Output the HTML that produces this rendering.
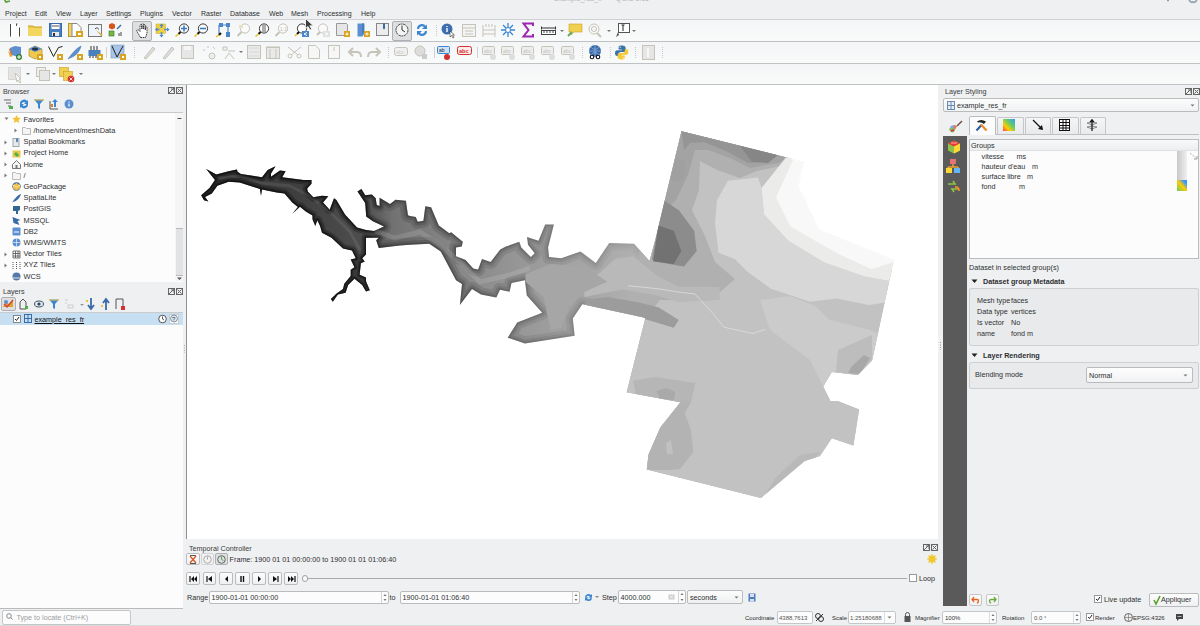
<!DOCTYPE html>
<html><head><meta charset="utf-8">
<style>
*{margin:0;padding:0;box-sizing:border-box}
html,body{width:1200px;height:626px;overflow:hidden;background:#eff0f1;font-family:"Liberation Sans",sans-serif;font-size:7.2px;color:#2d2f31}
.a{position:absolute}
.t{position:absolute;white-space:nowrap;line-height:9px}
.menu span{position:absolute;top:9px;font-size:7px;line-height:9px}
.tb{position:absolute;left:0;width:1200px;background:linear-gradient(#f4f5f6,#f9fafa);border-bottom:1px solid #bfc1c3}
.sel{position:absolute;border:1px solid #aeb0b2;border-radius:2px;background:#dedfe0}
.box{position:absolute;background:#fcfcfc;border:1px solid #bcbebf}
.btn{position:absolute;border:1px solid #b9bbbd;border-radius:2px;background:linear-gradient(#fcfcfc,#eff0f1)}
.inp{position:absolute;border:1px solid #b9bbbd;border-radius:2px;background:#fcfcfc}
svg.i{position:absolute;overflow:visible}
</style></head><body>
<!-- title strip -->
<div class="a" style="left:0;top:0;width:1200px;height:19px;background:#eff0f1"></div>
<svg class="i" style="left:2px;top:-4px" width="10" height="8"><path d="M1 1 L4 6 L8 5" stroke="#5b9c3a" stroke-width="1.6" fill="none"/></svg>
<div class="t" style="left:554px;top:-6.5px;color:#b4b6b9;font-size:7px">example_res_fr* — QGIS 3.16</div>
<svg class="i" style="left:1160px;top:0px" width="40" height="5"><rect x="7" y="0" width="2" height="1.2" fill="#999"/><path d="M29 -1.5a4 4 0 0 0 8 0" stroke="#9a9a9a" stroke-width="1.6" fill="none"/><path d="M32 2h2" stroke="#7fb3e0" stroke-width="1.5"/></svg>
<!-- menu -->
<div class="menu">
<span style="left:5px">Project</span>
<span style="left:35px">Edit</span>
<span style="left:56px">View</span>
<span style="left:80px">Layer</span>
<span style="left:106px">Settings</span>
<span style="left:140px">Plugins</span>
<span style="left:172px">Vector</span>
<span style="left:201px">Raster</span>
<span style="left:230px">Database</span>
<span style="left:269px">Web</span>
<span style="left:291px">Mesh</span>
<span style="left:317px">Processing</span>
<span style="left:361px">Help</span>
</div>
<!-- toolbars -->
<div class="tb" style="top:19px;height:23px;border-top:1px solid #cfd1d3"></div>
<div class="tb" style="top:42px;height:22px"></div>
<div class="tb" style="top:64px;height:21px"></div>
<!-- map canvas -->
<div class="a" style="left:186px;top:85px;width:752px;height:454px;background:#fff;border-left:1px solid #8e9092"></div>


<!-- bottom strip -->
<div class="a" style="left:0;top:625px;width:1200px;height:1px;background:#d8d9da"></div>
<svg class="i" style="left:9px;top:23px" width="12" height="14" viewBox="0 0 12 14"><rect x="2" y="1" width="8" height="12.5" fill="#fff"/><path d="M1.5 1v12.5M10.5 4.5v9" stroke="#444"/><path d="M7 1h1.5M7.5 1v2" stroke="#555" fill="none"/></svg>
<svg class="i" style="left:28px;top:24px" width="15" height="12" viewBox="0 0 15 12"><path d="M0 2h5l1 1h8v9H0z" fill="#e8c94a"/><path d="M0 4h14v8H0z" fill="#f2d660"/><path d="M0 2h5l1 1h8" stroke="#c9a12a" fill="none"/></svg>
<svg class="i" style="left:49px;top:23px" width="13" height="14" viewBox="0 0 13 14"><rect x="0.5" y="0.5" width="12" height="13" fill="#4a7fc0" stroke="#3a6aa8"/><rect x="2.5" y="1" width="8" height="5" fill="#fff"/><path d="M3 3h7" stroke="#555"/><rect x="3" y="9" width="7" height="4" fill="#e8e8e8"/><rect x="4" y="10" width="2" height="3" fill="#333"/></svg>
<svg class="i" style="left:68px;top:23px" width="16" height="14" viewBox="0 0 16 14"><rect x="0.5" y="0.5" width="8" height="13" fill="#f1d36a" stroke="#b8962a"/><path d="M4 0.5h5l4 4v9h-9z" fill="#fff" stroke="#888"/><rect x="8" y="8" width="7" height="6" fill="#d9a520"/><path d="M10 10h3v2h-3z" fill="#fff"/></svg>
<svg class="i" style="left:88px;top:23px" width="16" height="15" viewBox="0 0 16 15"><rect x="0.5" y="1.5" width="13" height="12" fill="#eef4fb" stroke="#777"/><path d="M7 5l1 1M9 4l0 2M10 6l1 0" stroke="#555"/><path d="M8 7l5 6 2-1z" fill="#e0b040"/></svg>
<svg class="i" style="left:109px;top:23px" width="13" height="14" viewBox="0 0 13 14"><polygon points="3,0 6,1.5 6,5 3,6.5 0,5 0,1.5" fill="#d9531e"/><rect x="0" y="8" width="5" height="5" fill="#7cb342" stroke="#2e7d32" stroke-width="0.6"/><path d="M8 6l4-4" stroke="#3a6aa8" stroke-width="1.5"/><path d="M10 10v3M12 9v4" stroke="#444"/></svg>
<div class="sel" style="left:132px;top:21px;width:20px;height:20px"></div>
<svg class="i" style="left:136px;top:23px" width="12" height="15" viewBox="0 0 12 15"><path d="M4.5 14.5L1 8.5c-0.8-1.5 0.8-2.5 1.8-1.2L4 8.5V2.5c0-1.2 1.8-1.2 1.8 0V6V1.5c0-1.2 1.8-1.2 1.8 0V6V2.5c0-1.2 1.8-1.2 1.8 0V7V4.5c0-1.1 1.6-1.1 1.6 0V10l-1.5 4.5z" fill="#fff" stroke="#111" stroke-width="0.8" stroke-dasharray="1.6 0.7"/><path d="M6.2 2v4M8 2.5v4" stroke="#666" stroke-width="0.6"/></svg>
<svg class="i" style="left:155px;top:23px" width="15" height="15" viewBox="0 0 15 15"><rect x="1" y="1" width="9.5" height="9.5" fill="#f0d040" stroke="#d0a820" stroke-width="0.5"/><path d="M6.5 0.5l-2 2.5h4zM6.5 14.5l-2-2.5h4zM0 6.5l2.5-2v4zM14.5 6.5l-2.5-2v4z" fill="#3f7fc8"/><path d="M6.5 2v3M6.5 9v4M1.5 6.5h3M9 6.5h4" stroke="#5b8fd0" stroke-width="1.6"/></svg>
<svg class="i" style="left:175px;top:23px" width="15" height="14" viewBox="0 0 15 14"><circle cx="9" cy="5.5" r="4.6" fill="#fff" stroke="#222" stroke-width="0.9"/><path d="M6 5.5h6M9 2.5v6" stroke="#3a78c0" stroke-width="1.6"/><path d="M5.5 9l-2 2" stroke="#111" stroke-width="2"/><path d="M3.5 11l-3 2.5" stroke="#e8c020" stroke-width="1.5"/></svg>
<svg class="i" style="left:194px;top:23px" width="15" height="14" viewBox="0 0 15 14"><circle cx="9" cy="5.5" r="4.6" fill="#fff" stroke="#222" stroke-width="0.9"/><path d="M6 5.5h6" stroke="#3a78c0" stroke-width="1.6"/><path d="M5.5 9l-2 2" stroke="#111" stroke-width="2"/><path d="M3.5 11l-3 2.5" stroke="#e8c020" stroke-width="1.5"/></svg>
<svg class="i" style="left:216px;top:23px" width="15" height="14" viewBox="0 0 15 14"><path d="M3 0h4v4H3zM10 0h4v4h-4zM10 9h4v5h-4z" fill="#4a86c8"/><path d="M3 2v10M12 2v10M3 2h10" stroke="#4a86c8" stroke-width="1.2" fill="none"/><path d="M5 10l-2 2" stroke="#111" stroke-width="2"/><path d="M3 12l-3 2" stroke="#e8c020" stroke-width="1.5"/></svg>
<svg class="i" style="left:236px;top:23px" width="15" height="14" viewBox="0 0 15 14"><circle cx="9" cy="5.5" r="4.6" fill="#fafafa" stroke="#c6c3b8"/><path d="M5.5 9l-4 4" stroke="#c6c3b8" stroke-width="2"/><rect x="3" y="2" width="4" height="3" fill="#e8e0c0"/></svg>
<svg class="i" style="left:255px;top:23px" width="15" height="14" viewBox="0 0 15 14"><circle cx="9" cy="5.5" r="4.6" fill="#fff" stroke="#222" stroke-width="0.9"/><path d="M8 2v7M10 2v7" stroke="#333" stroke-width="0.8"/><path d="M5.5 9l-2 2" stroke="#111" stroke-width="2"/><path d="M3.5 11l-3 2.5" stroke="#e8c020" stroke-width="1.5"/></svg>
<svg class="i" style="left:274px;top:23px" width="15" height="14" viewBox="0 0 15 14"><circle cx="9" cy="5.5" r="4.6" fill="#fafafa" stroke="#c6c3b8"/><path d="M5.5 9l-4 4" stroke="#c6c3b8" stroke-width="2"/><text x="6" y="8" font-size="5" fill="#bbb">1:1</text></svg>
<svg class="i" style="left:295px;top:23px" width="16" height="15" viewBox="0 0 16 15"><circle cx="7" cy="5.5" r="4.6" fill="#fff" stroke="#222" stroke-width="0.9"/><path d="M4 9l-2 2" stroke="#111" stroke-width="2"/><path d="M2 11l-2 2" stroke="#e8c020" stroke-width="1.5"/><rect x="7" y="8" width="7" height="6" fill="#4a86c8"/><path d="M12 9.5l-3 1.5 3 1.5" stroke="#fff" fill="none"/></svg>
<svg class="i" style="left:316px;top:23px" width="16" height="15" viewBox="0 0 16 15"><circle cx="7" cy="5.5" r="4.6" fill="#fafafa" stroke="#c6c3b8"/><path d="M4 9l-3 3" stroke="#c6c3b8" stroke-width="2"/><rect x="7" y="8" width="7" height="6" fill="#e0e0e0"/><path d="M9 9.5l3 1.5-3 1.5" stroke="#fff" fill="none"/></svg>
<svg class="i" style="left:336px;top:23px" width="16" height="14" viewBox="0 0 16 14"><path d="M0.5 0.5h10l1 1v11h-11z" fill="#e6e6e6" stroke="#999"/><rect x="8" y="8" width="6" height="6" fill="#d9a520"/><path d="M11 9.5v3M9.5 11h3" stroke="#fff"/></svg>
<svg class="i" style="left:357px;top:23px" width="14" height="14" viewBox="0 0 14 14"><path d="M0.5 0.5h7v10l-2 3h-5z" fill="#5b8fd0"/><path d="M6 0v10" stroke="#3a6aa8"/><rect x="7" y="8" width="6" height="6" fill="#d9a520"/><path d="M10 9.5v3M8.5 11h3" stroke="#fff"/></svg>
<svg class="i" style="left:376px;top:23px" width="13" height="14" viewBox="0 0 13 14"><rect x="0.5" y="0.5" width="12" height="12" fill="#ececec" stroke="#888"/><path d="M7 0.5v6l1-1 1 1v-6" fill="#3a6aa8"/></svg>
<div class="sel" style="left:392px;top:21px;width:20px;height:20px"></div>
<svg class="i" style="left:395px;top:23px" width="14" height="14" viewBox="0 0 14 14"><circle cx="7" cy="7" r="6" fill="#f4f4f4" stroke="#333" stroke-width="0.9" stroke-dasharray="2 0.6"/><path d="M7 2.5v4.5l3 2" stroke="#333" fill="none"/></svg>
<svg class="i" style="left:415px;top:23px" width="14" height="14" viewBox="0 0 14 14"><path d="M2 6a5 5 0 0 1 9-3l1-2v5h-5l2-2a3 3 0 0 0-5 2z" fill="#3a86d0"/><path d="M12 8a5 5 0 0 1-9 3l-1 2V8h5l-2 2a3 3 0 0 0 5-2z" fill="#3a86d0"/></svg>
<svg class="i" style="left:436px;top:24px" width="2" height="14"><path d="M0.5 1v12" stroke="#c8c8c8" stroke-dasharray="1 1"/></svg>
<svg class="i" style="left:441px;top:23px" width="15" height="15" viewBox="0 0 15 15"><circle cx="6" cy="6" r="5.5" fill="#3d6fb0"/><path d="M6 3v1M6 5v4" stroke="#fff" stroke-width="1.4"/><path d="M9 8v6l1.5-1.5 1.5 2.5 1-0.5-1.5-2.5h2z" fill="#fff" stroke="#333" stroke-width="0.6"/></svg>
<svg class="i" style="left:462px;top:24px" width="14" height="13" viewBox="0 0 14 13"><rect x="0.5" y="0.5" width="13" height="12" fill="#f4f4f4" stroke="#c6c3b8"/><path d="M1 4h12M3 7h8M3 10h8" stroke="#c6c3b8"/></svg>
<svg class="i" style="left:482px;top:24px" width="14" height="13" viewBox="0 0 14 13"><path d="M1 1v12M4 0v3M7 0v3M10 0v3M13 1v12M1 6h12M1 10h12" stroke="#c6c3b8" fill="none"/></svg>
<svg class="i" style="left:501px;top:23px" width="14" height="14" viewBox="0 0 14 14"><path d="M7 0v14M0 7h14M2 2l10 10M12 2L2 12" stroke="#3a86d0" stroke-width="1.3"/><circle cx="7" cy="7" r="2.5" fill="#fff" stroke="#3a86d0"/></svg>
<svg class="i" style="left:523px;top:23px" width="11" height="14" viewBox="0 0 11 14"><path d="M10 3V0.5H0.5l5 6.5-5 6.5H10V11" stroke="#9b27b0" stroke-width="2" fill="none"/></svg>
<svg class="i" style="left:541px;top:26px" width="15" height="9" viewBox="0 0 15 9"><path d="M0.5 0.5v3M14.5 0.5v3M0.5 2h14" stroke="#333"/><rect x="0.5" y="4.5" width="14" height="4" fill="#fff" stroke="#444"/><path d="M3 5v2M6 5v2M9 5v2M12 5v2" stroke="#444"/></svg>
<svg class="i" style="left:560px;top:30px" width="4" height="3"><path d="M0 0h4l-2 2z" fill="#777"/></svg>
<svg class="i" style="left:567px;top:23px" width="16" height="14" viewBox="0 0 16 14"><path d="M2 1h13v8H7l-3 3V9H2z" fill="#f0d050" stroke="#d0a020" stroke-width="0.6"/><path d="M1 13l4-4" stroke="#6a6" stroke-width="2"/></svg>
<svg class="i" style="left:587px;top:23px" width="15" height="14" viewBox="0 0 15 14"><circle cx="7" cy="6" r="5" fill="#f8f8f8" stroke="#c6c3b8"/><circle cx="7" cy="6" r="2.5" fill="none" stroke="#c6c3b8"/><path d="M10 10l4 4" stroke="#c6c3b8" stroke-width="2"/></svg>
<svg class="i" style="left:607px;top:30px" width="4" height="3"><path d="M0 0h4l-2 2z" fill="#777"/></svg>
<svg class="i" style="left:616px;top:23px" width="14" height="15" viewBox="0 0 14 15"><rect x="2.5" y="0.5" width="11" height="9" fill="#fff" stroke="#555"/><path d="M7 2v6M5.5 2h3" stroke="#222"/><path d="M2 9l-2 5 3-2" fill="#555"/></svg>
<svg class="i" style="left:632px;top:30px" width="4" height="3"><path d="M0 0h4l-2 2z" fill="#777"/></svg>
<svg class="i" style="left:8px;top:45px" width="15" height="15" viewBox="0 0 15 15"><path d="M1 4l4-2 1 6-3 3z" fill="#e07020"/><path d="M2 3l5-2 6 1v8l-3 2-6-2z" fill="#5b8fd0"/><path d="M0 6l2 6 3-1z" fill="#f0a030"/><circle cx="11" cy="12" r="3" fill="#2e7d32"/><path d="M11 10v4M9 12h4" stroke="#fff"/></svg>
<svg class="i" style="left:28px;top:45px" width="15" height="15" viewBox="0 0 15 15"><path d="M1 4l6-3 7 3v7l-7 3-6-3z" fill="#f0c850" stroke="#a08020" stroke-width="0.6"/><path d="M1 4l6 3 7-3-7-3z" fill="#5b8fd0"/><ellipse cx="7" cy="4" rx="3" ry="1.5" fill="#234"/><rect x="9" y="9" width="6" height="6" fill="#d9a520"/><rect x="11" y="11" width="2" height="2" fill="#fff"/></svg>
<svg class="i" style="left:48px;top:45px" width="15" height="15" viewBox="0 0 15 15"><path d="M0.5 1.5l5 10 5-9 4-1" stroke="#222" fill="none" stroke-width="1"/><rect x="9" y="9" width="6" height="6" fill="#d9a520"/><rect x="11" y="11" width="2" height="2" fill="#fff"/></svg>
<svg class="i" style="left:68px;top:45px" width="15" height="15" viewBox="0 0 15 15"><path d="M0 14c3-4 7-10 13-13-1 5-5 10-11 12z" fill="#5b8fd0" stroke="#3a6aa8" stroke-width="0.5"/><rect x="9" y="9" width="6" height="6" fill="#d9a520"/><rect x="11" y="11" width="2" height="2" fill="#fff"/></svg>
<svg class="i" style="left:88px;top:45px" width="15" height="15" viewBox="0 0 15 15"><rect x="0.5" y="5" width="12" height="6" fill="#4a7fc0"/><path d="M3 1v4M6 1v4M9 1v4" stroke="#333"/><path d="M2 11v2M5 11v2M8 11v2" stroke="#333"/><rect x="9" y="9" width="6" height="6" fill="#d9a520"/><rect x="11" y="11" width="2" height="2" fill="#fff"/></svg>
<div class="a" style="left:106px;top:47px;width:1px;height:11px;background:#cfd0d2"></div>
<svg class="i" style="left:111px;top:45px" width="15" height="15" viewBox="0 0 15 15"><rect x="0" y="0" width="13" height="13" fill="#a8c4e6" stroke="#7a9cc6" stroke-width="0.6"/><path d="M1 1l5 11 6-11M6 12" stroke="#222" fill="none"/><rect x="9" y="9" width="6" height="6" fill="#d9a520"/><rect x="11" y="11" width="2" height="2" fill="#fff"/></svg>
<svg class="i" style="left:134px;top:46px" width="2" height="14"><path d="M0.5 1v12" stroke="#c8c8c8" stroke-dasharray="1 1"/></svg>
<svg class="i" style="left:142px;top:45px" width="14" height="15" viewBox="0 0 14 15"><path d="M2 13l9-11 2 2-9 10z" fill="#ddd" stroke="#c6c3b8"/></svg>
<svg class="i" style="left:161px;top:45px" width="14" height="15" viewBox="0 0 14 15"><path d="M2 13l9-11 2 2-9 10z" fill="#ddd" stroke="#c6c3b8"/></svg>
<svg class="i" style="left:181px;top:45px" width="13" height="14" viewBox="0 0 13 14"><rect x="0.5" y="0.5" width="12" height="13" fill="#e6e6e6" stroke="#c6c3b8"/><rect x="3" y="1" width="7" height="4" fill="#f6f6f6"/></svg>
<svg class="i" style="left:202px;top:45px" width="15" height="15" viewBox="0 0 15 15"><path d="M1 5h2M5 2h2M11 2l2 2" stroke="#c6c3b8"/><circle cx="10" cy="11" r="3" fill="#eee" stroke="#c6c3b8"/></svg>
<svg class="i" style="left:222px;top:45px" width="14" height="15" viewBox="0 0 14 15"><path d="M1 2h4v3H1zM3 14l4-6 5 6M6 6h7" stroke="#c6c3b8" fill="none"/></svg>
<svg class="i" style="left:239px;top:51px" width="4" height="3"><path d="M0 0h4l-2 2z" fill="#777"/></svg>
<svg class="i" style="left:247px;top:45px" width="14" height="14" viewBox="0 0 14 14"><rect x="0.5" y="0.5" width="13" height="13" fill="#eaeaea" stroke="#c6c3b8"/><path d="M2 3h10M2 7h10M2 11h10" stroke="#d8d8d8"/></svg>
<svg class="i" style="left:266px;top:45px" width="14" height="14" viewBox="0 0 14 14"><rect x="0.5" y="2.5" width="13" height="11" fill="#eaeaea" stroke="#c6c3b8"/><path d="M0 2h14M4 4v9M10 4v9" stroke="#c6c3b8"/></svg>
<svg class="i" style="left:287px;top:45px" width="15" height="14" viewBox="0 0 15 14"><circle cx="3" cy="11" r="2" fill="none" stroke="#c6c3b8"/><circle cx="12" cy="11" r="2" fill="none" stroke="#c6c3b8"/><path d="M1 2l10 8M14 2l-10 8" stroke="#c6c3b8"/></svg>
<svg class="i" style="left:308px;top:45px" width="12" height="14" viewBox="0 0 12 14"><path d="M0.5 0.5h7l4 4v9h-11z" fill="#f6f6f6" stroke="#c6c3b8"/></svg>
<svg class="i" style="left:328px;top:45px" width="12" height="14" viewBox="0 0 12 14"><rect x="0.5" y="0.5" width="11" height="13" fill="#f6f6f6" stroke="#c6c3b8"/><path d="M6 2v4" stroke="#c6c3b8"/></svg>
<svg class="i" style="left:348px;top:47px" width="14" height="11" viewBox="0 0 14 11"><path d="M5 1L1 5l4 4M1 5h8c3 0 4 2 4 5" stroke="#c6c3b8" stroke-width="2" fill="none"/></svg>
<svg class="i" style="left:367px;top:47px" width="14" height="11" viewBox="0 0 14 11"><path d="M9 1l4 4-4 4M13 5H5c-3 0-4 2-4 5" stroke="#c6c3b8" stroke-width="2" fill="none"/></svg>
<svg class="i" style="left:388px;top:46px" width="2" height="14"><path d="M0.5 1v12" stroke="#c8c8c8" stroke-dasharray="1 1"/></svg>
<svg class="i" style="left:394px;top:47px" width="14" height="10" viewBox="0 0 14 10"><rect x="0.5" y="0.5" width="13" height="8" rx="2" fill="#f0f0f0" stroke="#c6c3b8"/><text x="2" y="7" font-size="5" fill="#ccc">abc</text></svg>
<svg class="i" style="left:414px;top:45px" width="14" height="15" viewBox="0 0 14 15"><circle cx="6" cy="6" r="5" fill="#ddd" stroke="#c6c3b8"/><rect x="8" y="9" width="5" height="5" fill="#ccc"/></svg>
<div class="a" style="left:434px;top:47px;width:1px;height:11px;background:#cfd0d2"></div>
<svg class="i" style="left:437px;top:46px" width="15" height="14" viewBox="0 0 15 14"><rect x="0.5" y="0.5" width="12" height="7" rx="1" fill="#cfe3f6" stroke="#3a86d0"/><text x="2" y="6" font-size="5" fill="#123">ab</text><circle cx="10" cy="11" r="3" fill="#d32f2f"/></svg>
<svg class="i" style="left:457px;top:46px" width="15" height="10" viewBox="0 0 15 10"><rect x="0.5" y="0.5" width="14" height="8" rx="2" fill="#fdeaea" stroke="#d32f2f"/><text x="2" y="7" font-size="5.5" fill="#d32f2f" font-weight="bold">abc</text></svg>
<div class="a" style="left:477px;top:47px;width:1px;height:11px;background:#cfd0d2"></div>
<svg class="i" style="left:482px;top:46px" width="15" height="14" viewBox="0 0 15 14"><rect x="0.5" y="0.5" width="12" height="8" rx="1" fill="#eee" stroke="#c6c3b8"/><text x="2" y="7" font-size="5" fill="#c4c4c4">abc</text><circle cx="11" cy="11" r="3" fill="#ddd"/></svg>
<svg class="i" style="left:501px;top:46px" width="15" height="14" viewBox="0 0 15 14"><rect x="0.5" y="0.5" width="12" height="8" rx="1" fill="#eee" stroke="#c6c3b8"/><text x="2" y="7" font-size="5" fill="#c4c4c4">abc</text><circle cx="11" cy="11" r="3" fill="#ddd"/></svg>
<svg class="i" style="left:521px;top:46px" width="15" height="14" viewBox="0 0 15 14"><rect x="0.5" y="0.5" width="12" height="8" rx="1" fill="#eee" stroke="#c6c3b8"/><text x="2" y="7" font-size="5" fill="#c4c4c4">abc</text><circle cx="11" cy="11" r="3" fill="#ddd"/></svg>
<svg class="i" style="left:541px;top:46px" width="15" height="14" viewBox="0 0 15 14"><rect x="0.5" y="0.5" width="12" height="8" rx="1" fill="#eee" stroke="#c6c3b8"/><text x="2" y="7" font-size="5" fill="#c4c4c4">abc</text><circle cx="11" cy="11" r="3" fill="#ddd"/></svg>
<svg class="i" style="left:561px;top:46px" width="15" height="14" viewBox="0 0 15 14"><rect x="0.5" y="0.5" width="12" height="8" rx="1" fill="#eee" stroke="#c6c3b8"/><text x="2" y="7" font-size="5" fill="#c4c4c4">abc</text><circle cx="11" cy="11" r="3" fill="#ddd"/></svg>
<svg class="i" style="left:582px;top:46px" width="2" height="14"><path d="M0.5 1v12" stroke="#c8c8c8" stroke-dasharray="1 1"/></svg>
<svg class="i" style="left:588px;top:45px" width="15" height="15" viewBox="0 0 15 15"><circle cx="7" cy="6" r="6" fill="#3a6aa8"/><path d="M1 6h12M7 0v12M3 2c2 3 6 3 8 0M3 10c2-3 6-3 8 0" stroke="#a9c8ec" stroke-width="0.6" fill="none"/><circle cx="4" cy="12" r="2.3" fill="#111"/><circle cx="10" cy="12" r="2.3" fill="#111"/><circle cx="4" cy="12" r="1.2" fill="#fff"/><circle cx="10" cy="12" r="1.2" fill="#fff"/></svg>
<svg class="i" style="left:610px;top:46px" width="2" height="14"><path d="M0.5 1v12" stroke="#c8c8c8" stroke-dasharray="1 1"/></svg>
<svg class="i" style="left:615px;top:45px" width="14" height="15" viewBox="0 0 14 15"><path d="M6.5 0.5C3.5 0.5 3.6 1.8 3.6 3v1.6h3.1v.6H2.2C0.9 5.2 0 6.1 0 8s0.8 2.9 2.1 2.9h1.3V9.2c0-1.3 1.1-2.3 2.3-2.3h3.1c1.1 0 1.9-.9 1.9-1.9V3c0-1.1-.9-2.5-4.2-2.5z" fill="#3a73a8"/><circle cx="5.2" cy="2.2" r="0.6" fill="#fff"/><path d="M6.8 14.5c3 0 2.9-1.3 2.9-2.5v-1.6H6.6v-.6h4.5c1.3 0 2.2-.9 2.2-2.8s-.8-2.9-2.1-2.9H9.9v1.7c0 1.3-1.1 2.3-2.3 2.3H4.5c-1.1 0-1.9.9-1.9 1.9V12c0 1.1.9 2.5 4.2 2.5z" fill="#f5c836"/><circle cx="8.1" cy="12.8" r="0.6" fill="#fff"/></svg>
<svg class="i" style="left:635px;top:46px" width="2" height="14"><path d="M0.5 1v12" stroke="#c8c8c8" stroke-dasharray="1 1"/></svg>
<svg class="i" style="left:642px;top:45px" width="13" height="15" viewBox="0 0 13 15"><rect x="0.5" y="0.5" width="12" height="14" fill="#e6e6e6" stroke="#c6c3b8"/><path d="M6 3v9" stroke="#f8f8f8" stroke-width="2"/></svg>
<svg class="i" style="left:662px;top:46px" width="2" height="14"><path d="M0.5 1v12" stroke="#c8c8c8" stroke-dasharray="1 1"/></svg>
<svg class="i" style="left:8px;top:67px" width="15" height="15" viewBox="0 0 15 15"><rect x="0.5" y="0.5" width="12" height="12" fill="#e4e4e4" stroke="#c6c3b8" stroke-dasharray="1 1"/><path d="M7 6l6 6-2 0 2 3-1 1-2-3-1 2z" fill="#fff" stroke="#c6c3b8"/></svg>
<svg class="i" style="left:26px;top:73px" width="4" height="3"><path d="M0 0h4l-2 2z" fill="#777"/></svg>
<svg class="i" style="left:36px;top:67px" width="14" height="14" viewBox="0 0 14 14"><rect x="0.5" y="0.5" width="9" height="9" fill="#eee" stroke="#c6c3b8"/><rect x="3.5" y="3.5" width="10" height="10" fill="#e6e6e6" stroke="#c6c3b8"/></svg>
<svg class="i" style="left:52px;top:73px" width="4" height="3"><path d="M0 0h4l-2 2z" fill="#777"/></svg>
<svg class="i" style="left:59px;top:67px" width="16" height="16" viewBox="0 0 16 16"><rect x="0.5" y="0.5" width="9" height="9" fill="#f0d050" stroke="#c8a020" stroke-width="0.6"/><rect x="4.5" y="4.5" width="9" height="9" fill="#f0d050" stroke="#c8a020" stroke-width="0.6"/><circle cx="12" cy="12" r="3.3" fill="#d32f2f"/><path d="M10.5 10.5l3 3M13.5 10.5l-3 3" stroke="#fff" stroke-width="0.8"/></svg>
<svg class="i" style="left:79px;top:73px" width="4" height="3"><path d="M0 0h4l-2 2z" fill="#777"/></svg>
<svg class="i" style="left:303px;top:17px" width="12" height="14" viewBox="0 0 12 14"><path d="M2.5 1.5v10l2.5-2 2 3.5 1.8-0.8-2-3.4h3.5z" fill="#3d3d3d" stroke="#fff" stroke-width="0.8"/></svg><div class="t" style="left:3px;top:87.0px;color:#3a3c3e">Browser</div>
<svg class="i" style="left:168px;top:87px" width="15" height="8" viewBox="0 0 15 8"><rect x="0.5" y="0.5" width="6" height="6" fill="none" stroke="#666"/><path d="M1 6l5-5M3 2h3v3" stroke="#666" fill="none"/><rect x="8.5" y="0.5" width="6" height="6" fill="none" stroke="#666"/><path d="M9.5 1.5l4 4M13.5 1.5l-4 4" stroke="#666"/></svg>
<svg class="i" style="left:4px;top:99px" width="10" height="11" viewBox="0 0 10 11"><path d="M0 1h7M2 4h5M4 7h3" stroke="#666"/><rect x="5" y="7" width="4" height="3" fill="#4caf50"/></svg>
<svg class="i" style="left:19px;top:99px" width="10" height="10" viewBox="0 0 10 10"><path d="M1 5a4 4 0 0 1 7-3l1-1v4H5l1.5-1.5a2.5 2.5 0 0 0-4 1.5z" fill="#3a86d0"/><path d="M9 5a4 4 0 0 1-7 3l-1 1V5h4L3.5 6.5a2.5 2.5 0 0 0 4-1.5z" fill="#3a86d0"/></svg>
<svg class="i" style="left:34px;top:99px" width="10" height="10" viewBox="0 0 10 10"><path d="M0 0.5h10L6 5v5L4 9V5z" fill="#3a86d0"/><path d="M0 1h10" stroke="#f0c040"/></svg>
<svg class="i" style="left:49px;top:99px" width="10" height="10" viewBox="0 0 10 10"><path d="M1 2v8h8" stroke="#555" fill="none"/><path d="M6 0l3 3H7v5H5V3H3z" fill="#3a86d0"/><rect x="2" y="5" width="2" height="3" fill="#e08020"/></svg>
<svg class="i" style="left:64px;top:99px" width="10" height="10" viewBox="0 0 10 10"><circle cx="5" cy="5" r="4.5" fill="#5b8fd0"/><path d="M5 2.5v1M5 4.5v3" stroke="#fff" stroke-width="1.2"/></svg>
<div class="a" style="left:0;top:112px;width:183px;height:170px;background:#fcfcfc;border-top:1px solid #c8cacc"></div>
<div class="a" style="left:175px;top:113px;width:8px;height:168px;background:#f5f5f6"></div>
<div class="a" style="left:176px;top:228px;width:7px;height:48px;background:#e2e3e4;border-top:1px solid #b8b8b8;border-bottom:1px solid #b8b8b8"></div>
<svg class="i" style="left:176px;top:115px" width="7" height="5" viewBox="0 0 7 5"><path d="M1.5 3.5h4" stroke="#555"/></svg>
<svg class="i" style="left:176px;top:277px" width="7" height="4" viewBox="0 0 7 4"><path d="M1 0.5h5L3.5 3z" fill="#555"/></svg>
<svg class="i" style="left:4px;top:117px" width="5" height="4" viewBox="0 0 5 4"><path d="M0.5 0.5h4L2.5 3z" fill="#777"/></svg>
<svg class="i" style="left:12px;top:114.5px" width="9" height="9" viewBox="0 0 9 9"><path d="M4.5 0l1.3 2.8 3 .3-2.3 2 .7 3-2.7-1.6-2.7 1.6.7-3-2.3-2 3-.3z" fill="#f2c230"/></svg>
<div class="t" style="left:23.5px;top:114.7px;font-size:7.4px">Favorites</div>
<svg class="i" style="left:14px;top:128px" width="4" height="5" viewBox="0 0 4 5"><path d="M0.5 0.5v4L3 2.5z" fill="#777"/></svg>
<svg class="i" style="left:22px;top:125.5px" width="9" height="9" viewBox="0 0 9 9"><path d="M0.5 1.5h3l1 1h4v6h-8z" fill="#f4f4f4" stroke="#bbb"/></svg>
<div class="t" style="left:33.5px;top:125.9px;font-size:7.4px">/home/vincent/meshData</div>
<svg class="i" style="left:4px;top:140px" width="4" height="5" viewBox="0 0 4 5"><path d="M0.5 0.5v4L3 2.5z" fill="#777"/></svg>
<svg class="i" style="left:12px;top:137.5px" width="9" height="9" viewBox="0 0 9 9"><rect x="1" y="0.5" width="6" height="8" fill="#e8e8ee" stroke="#9aa"/><path d="M4 0.5v4l1-1 1 1v-4" fill="#5b7fb0"/></svg>
<div class="t" style="left:23.5px;top:137.1px;font-size:7.4px">Spatial Bookmarks</div>
<svg class="i" style="left:4px;top:151px" width="4" height="5" viewBox="0 0 4 5"><path d="M0.5 0.5v4L3 2.5z" fill="#777"/></svg>
<svg class="i" style="left:12px;top:148.5px" width="9" height="9" viewBox="0 0 9 9"><rect x="0.5" y="1.5" width="8" height="7" fill="#e8c84a"/><path d="M2 5l2-2 3 3-2 2z" fill="#4caf50"/></svg>
<div class="t" style="left:23.5px;top:148.3px;font-size:7.4px">Project Home</div>
<svg class="i" style="left:4px;top:162px" width="4" height="5" viewBox="0 0 4 5"><path d="M0.5 0.5v4L3 2.5z" fill="#777"/></svg>
<svg class="i" style="left:12px;top:159.5px" width="9" height="9" viewBox="0 0 9 9"><path d="M0.5 4.5l4-4 4 4v4h-8z" fill="#f4f4f4" stroke="#777"/><rect x="3.5" y="5" width="2" height="3.5" fill="#777"/></svg>
<div class="t" style="left:23.5px;top:159.5px;font-size:7.4px">Home</div>
<svg class="i" style="left:4px;top:173px" width="4" height="5" viewBox="0 0 4 5"><path d="M0.5 0.5v4L3 2.5z" fill="#777"/></svg>
<svg class="i" style="left:12px;top:170.5px" width="9" height="9" viewBox="0 0 9 9"><path d="M0.5 1.5h3l1 1h4v6h-8z" fill="#f4f4f4" stroke="#bbb"/></svg>
<div class="t" style="left:23.5px;top:170.7px;font-size:7.4px">/</div>
<svg class="i" style="left:12px;top:181.5px" width="9" height="9" viewBox="0 0 9 9"><circle cx="4.5" cy="4.5" r="4.2" fill="#3a6aa8"/><path d="M1 3l3.5-2 3.5 2v3.5l-3.5 2-3.5-2z" fill="#f0c040"/><path d="M1 3l3.5 2 3.5-2" stroke="#fff" fill="none" stroke-width="0.6"/></svg>
<div class="t" style="left:23.5px;top:181.9px;font-size:7.4px">GeoPackage</div>
<svg class="i" style="left:12px;top:193.5px" width="9" height="9" viewBox="0 0 9 9"><path d="M0 9c2-3 4-7 9-9-1 4-4 7-8 8z" fill="#3a6aa8"/></svg>
<div class="t" style="left:23.5px;top:193.1px;font-size:7.4px">SpatiaLite</div>
<svg class="i" style="left:12px;top:204.5px" width="9" height="9" viewBox="0 0 9 9"><path d="M1 1h7v4l-2 1v3H4V6H1z" fill="#336791"/></svg>
<div class="t" style="left:23.5px;top:204.3px;font-size:7.4px">PostGIS</div>
<svg class="i" style="left:12px;top:215.5px" width="9" height="9" viewBox="0 0 9 9"><path d="M0.5 1l8 3-3 1 2 4-6-2z" fill="#3a6aa8"/></svg>
<div class="t" style="left:23.5px;top:215.5px;font-size:7.4px">MSSQL</div>
<svg class="i" style="left:12px;top:226.5px" width="9" height="9" viewBox="0 0 9 9"><rect x="0.5" y="0.5" width="8" height="8" rx="1" fill="#5b8fd0"/><path d="M2 5h5" stroke="#fff"/></svg>
<div class="t" style="left:23.5px;top:226.7px;font-size:7.4px">DB2</div>
<svg class="i" style="left:12px;top:237.5px" width="9" height="9" viewBox="0 0 9 9"><circle cx="4.5" cy="4.5" r="4" fill="#5b8fd0"/><path d="M0.5 4.5h8M4.5 0.5v8" stroke="#fff" stroke-width="0.6"/></svg>
<div class="t" style="left:23.5px;top:237.9px;font-size:7.4px">WMS/WMTS</div>
<svg class="i" style="left:4px;top:252px" width="4" height="5" viewBox="0 0 4 5"><path d="M0.5 0.5v4L3 2.5z" fill="#777"/></svg>
<svg class="i" style="left:12px;top:249.5px" width="9" height="9" viewBox="0 0 9 9"><path d="M1 1h7v7H1zM1 3.5h7M1 6h7M3.5 1v7M6 1v7" stroke="#444" fill="none" stroke-width="0.7"/></svg>
<div class="t" style="left:23.5px;top:249.1px;font-size:7.4px">Vector Tiles</div>
<svg class="i" style="left:4px;top:263px" width="4" height="5" viewBox="0 0 4 5"><path d="M0.5 0.5v4L3 2.5z" fill="#777"/></svg>
<svg class="i" style="left:12px;top:260.5px" width="9" height="9" viewBox="0 0 9 9"><path d="M1 1v7M4.5 1v7M8 1v7" stroke="#555" stroke-dasharray="1 1"/></svg>
<div class="t" style="left:23.5px;top:260.3px;font-size:7.4px">XYZ Tiles</div>
<svg class="i" style="left:12px;top:271.5px" width="9" height="9" viewBox="0 0 9 9"><circle cx="4.5" cy="4.5" r="4" fill="#5577aa"/><path d="M1 6h7" stroke="#fff" stroke-width="0.8"/></svg>
<div class="t" style="left:23.5px;top:271.5px;font-size:7.4px">WCS</div>
<div class="t" style="left:3px;top:287.2px;color:#3a3c3e">Layers</div>
<svg class="i" style="left:168px;top:288px" width="15" height="8" viewBox="0 0 15 8"><rect x="0.5" y="0.5" width="6" height="6" fill="none" stroke="#666"/><path d="M1 6l5-5M3 2h3v3" stroke="#666" fill="none"/><rect x="8.5" y="0.5" width="6" height="6" fill="none" stroke="#666"/><path d="M9.5 1.5l4 4M13.5 1.5l-4 4" stroke="#666"/></svg>
<div class="sel" style="left:1px;top:297px;width:15px;height:14px"></div>
<svg class="i" style="left:3px;top:299px" width="11" height="10" viewBox="0 0 11 10"><path d="M0 8l3-5 3 2 4-5v8z" fill="#e0a030"/><path d="M1 5l3 3 6-7" stroke="#d04040" fill="none" stroke-width="1.2"/><circle cx="3" cy="3" r="2" fill="#5b8fd0"/></svg>
<svg class="i" style="left:19px;top:298px" width="10" height="12" viewBox="0 0 10 12"><path d="M1 11V4l3-3 3 3v7z" fill="none" stroke="#555"/><rect x="6" y="8" width="3" height="3" fill="#4caf50"/></svg>
<svg class="i" style="left:34px;top:299px" width="10" height="10" viewBox="0 0 10 10"><ellipse cx="5" cy="5" rx="4.5" ry="3" fill="#dde6f0" stroke="#456"/><circle cx="5" cy="5" r="1.6" fill="#345"/></svg>
<svg class="i" style="left:49px;top:299px" width="10" height="10" viewBox="0 0 10 10"><path d="M0 0.5h10L6 5v5L4 9V5z" fill="#3a86d0"/><path d="M0 1h10" stroke="#f0c040"/></svg>
<svg class="i" style="left:64px;top:299px" width="10" height="10" viewBox="0 0 10 10"><path d="M1 1h3M1 4h2M4 6h5v3H4z" stroke="#ccc" fill="none"/></svg>
<svg class="i" style="left:80px;top:304px" width="4" height="3" viewBox="0 0 4 3"><path d="M0 0h4l-2 2z" fill="#999"/></svg>
<svg class="i" style="left:86px;top:298px" width="10" height="12" viewBox="0 0 10 12"><path d="M5 0v10M2 7l3 4 3-4" stroke="#3a6aa8" stroke-width="1.8" fill="none"/><rect x="0" y="2" width="2" height="2" fill="#f0c040"/></svg>
<svg class="i" style="left:101px;top:298px" width="10" height="12" viewBox="0 0 10 12"><path d="M5 12V2M2 5l3-4 3 4" stroke="#3a6aa8" stroke-width="1.8" fill="none"/><rect x="0" y="7" width="2" height="2" fill="#f0c040"/></svg>
<svg class="i" style="left:115px;top:298px" width="10" height="12" viewBox="0 0 10 12"><path d="M1 11V1h7v8" stroke="#555" fill="none"/><rect x="6" y="8" width="4" height="4" fill="#d32f2f"/></svg>
<div class="a" style="left:0;top:312px;width:183px;height:297px;background:#fcfcfc;border-top:1px solid #c8cacc;border-bottom:1px solid #b8babc"></div>
<div class="a" style="left:0;top:313px;width:183px;height:12px;background:#c6dff3"></div>
<svg class="i" style="left:13px;top:315px" width="8" height="8" viewBox="0 0 8 8"><rect x="0.5" y="0.5" width="7" height="7" fill="#fff" stroke="#888"/><path d="M2 4l1.5 1.5L6 2" stroke="#222" fill="none"/></svg>
<svg class="i" style="left:24px;top:314px" width="9" height="10" viewBox="0 0 9 10"><rect x="0.5" y="0.5" width="7" height="8" fill="none" stroke="#3a6aa8"/><path d="M0.5 4.5h7M4 0.5v8" stroke="#3a6aa8"/></svg>
<div class="t" style="left:34.5px;top:314.8px;color:#111"><u>example_res_fr</u></div>
<svg class="i" style="left:158px;top:314px" width="9" height="10" viewBox="0 0 9 10"><circle cx="4.5" cy="5" r="3.8" fill="#fff" stroke="#555"/><path d="M4.5 2.5v2.5l1.5 1" stroke="#555" fill="none"/></svg>
<svg class="i" style="left:169px;top:314px" width="10" height="10" viewBox="0 0 10 10"><rect x="0.5" y="0.5" width="9" height="9" fill="#fff" stroke="#ccc"/><circle cx="5" cy="4.5" r="3.5" fill="#dce8f4" stroke="#456" stroke-width="0.6"/><text x="3" y="7" font-size="6" fill="#234">?</text></svg>
<div class="inp" style="left:2px;top:610px;width:129px;height:15px;border-color:#c4c6c8"></div>
<svg class="i" style="left:6px;top:613px" width="8" height="8" viewBox="0 0 8 8"><circle cx="3" cy="3" r="2.3" fill="none" stroke="#888"/><path d="M4.6 4.6l2 2" stroke="#888"/></svg>
<div class="t" style="left:16.5px;top:613.3px;color:#9a9c9e">Type to locate (Ctrl+K)</div><svg class="a" style="left:0;top:0" width="1200" height="626" viewBox="0 0 1200 626">
<defs>
<clipPath id="mc"><polygon points="206.2,169.0 216.3,174.5 228.6,171.2 237.0,169.5 237.5,171.7 240.9,174.0 262.0,177.3 267.7,170.0 275.5,166.2 271.0,173.4 271.0,176.8 280.0,170.6 285.6,171.2 282.2,177.3 303.5,180.0 311.5,180.0 311.5,183.8 307.2,188.6 307.7,191.5 313.4,197.3 322.0,195.8 328.3,196.3 323.0,202.5 329.7,209.7 334.0,198.2 336.4,200.1 345.0,214.5 357.0,227.6 366.0,230.0 374.0,231.0 384.0,226.5 372.9,221.2 366.2,216.4 365.2,203.0 357.5,191.5 361.4,189.1 365.2,195.3 371.9,194.4 375.7,198.2 376.7,204.9 379.6,205.9 379.6,197.7 390.0,204.0 395.5,199.7 405.9,200.8 408.0,215.3 410.0,215.9 415.8,216.9 417.7,221.7 423.4,220.7 425.3,206.3 431.1,207.3 438.8,225.5 449.3,233.2 451.2,232.2 462.8,241.8 461.8,246.6 456.0,247.5 456.0,256.2 465.6,260.0 473.3,268.6 478.1,269.6 482.0,259.0 490.6,262.0 500.2,249.5 505.9,246.6 519.3,241.8 521.3,247.5 530.9,257.1 534.7,253.3 528.0,244.7 527.0,237.0 538.5,240.8 545.2,224.5 553.9,224.5 548.1,247.5 549.1,257.1 561.3,258.2 580.5,251.5 595.8,263.0 609.2,242.9 634.1,243.8 649.5,261.1 655.2,240.0 681.5,131.2 803.4,161.7 798.3,186.0 818.8,229.4 894.2,260.1 889.4,280.0 872.1,360.6 857.7,375.0 831.8,372.0 823.2,386.5 830.4,400.9 837.6,400.9 859.1,409.5 853.4,445.5 831.8,438.3 820.0,456.0 804.6,461.0 760.9,498.0 646.8,469.5 648.5,454.4 660.3,427.5 680.4,402.3 626.7,392.3 645.2,318.5 643.7,317.6 582.4,304.2 572.8,318.6 574.7,335.8 524.9,343.5 507.7,337.7 517.2,322.4 542.2,312.8 526.8,295.6 524.9,280.2 511.5,283.1 509.6,291.7 500.0,289.8 496.3,297.4 481.0,294.5 472.0,289.0 459.9,305.1 462.0,284.0 456.0,280.2 440.7,251.4 429.2,243.7 410.0,244.7 400.0,245.4 378.8,248.0 376.2,240.3 378.8,237.8 366.0,237.8 366.0,254.4 362.2,258.2 364.7,261.4 360.9,263.3 359.6,274.8 366.0,277.4 366.0,281.2 369.8,290.2 366.0,291.5 362.2,285.0 354.5,278.7 348.1,285.0 345.6,292.7 337.9,294.6 332.8,301.7 330.9,299.1 336.6,293.4 343.0,288.9 344.3,283.8 350.7,276.1 350.7,269.7 354.5,267.2 350.7,259.5 355.8,258.2 352.0,250.6 343.0,248.6 331.5,237.8 322.0,232.7 320.1,226.0 317.3,220.3 315.3,226.0 312.5,219.3 312.5,215.5 305.8,211.6 300.0,206.8 292.3,213.7 297.9,207.0 292.3,202.5 284.5,193.6 276.7,192.4 262.0,189.6 261.0,195.8 259.9,189.0 239.7,182.4 228.6,181.8 217.4,185.7 211.8,193.6 205.0,197.0 208.4,201.4 204.0,200.3 201.2,195.2 209.5,188.0 215.0,180.0"/></clipPath>
<linearGradient id="mg" x1="370" y1="0" x2="680" y2="0" gradientUnits="userSpaceOnUse"><stop offset="0" stop-color="#000"/><stop offset="0.08" stop-color="#fff"/><stop offset="0.25" stop-color="#fff"/><stop offset="1" stop-color="#000"/></linearGradient>
<mask id="lm" maskUnits="userSpaceOnUse" x="190" y="120" width="720" height="400"><rect x="190" y="120" width="720" height="400" fill="url(#mg)"/></mask>
<linearGradient id="dg" x1="368" y1="0" x2="395" y2="0" gradientUnits="userSpaceOnUse"><stop offset="0" stop-color="#fff"/><stop offset="1" stop-color="#000"/></linearGradient>
<mask id="dm" maskUnits="userSpaceOnUse" x="190" y="120" width="720" height="400"><rect x="190" y="120" width="720" height="400" fill="url(#dg)"/></mask>
<linearGradient id="g1" x1="200" y1="0" x2="660" y2="0" gradientUnits="userSpaceOnUse">
<stop offset="0" stop-color="#383838"/><stop offset="0.2" stop-color="#3e3e3e"/><stop offset="0.36" stop-color="#4e4e4e"/><stop offset="0.42" stop-color="#727272"/><stop offset="0.55" stop-color="#868686"/><stop offset="0.78" stop-color="#a0a0a0"/><stop offset="1" stop-color="#b6b6b6"/>
</linearGradient>
</defs>
<g clip-path="url(#mc)">
<rect x="190" y="120" width="720" height="400" fill="url(#g1)"/>
<g mask="url(#dm)" fill="none" stroke-linejoin="round">
<polygon points="206.2,169.0 216.3,174.5 228.6,171.2 237.0,169.5 237.5,171.7 240.9,174.0 262.0,177.3 267.7,170.0 275.5,166.2 271.0,173.4 271.0,176.8 280.0,170.6 285.6,171.2 282.2,177.3 303.5,180.0 311.5,180.0 311.5,183.8 307.2,188.6 307.7,191.5 313.4,197.3 322.0,195.8 328.3,196.3 323.0,202.5 329.7,209.7 334.0,198.2 336.4,200.1 345.0,214.5 357.0,227.6 366.0,230.0 374.0,231.0 384.0,226.5 372.9,221.2 366.2,216.4 365.2,203.0 357.5,191.5 361.4,189.1 365.2,195.3 371.9,194.4 375.7,198.2 376.7,204.9 379.6,205.9 379.6,197.7 390.0,204.0 395.5,199.7 405.9,200.8 408.0,215.3 410.0,215.9 415.8,216.9 417.7,221.7 423.4,220.7 425.3,206.3 431.1,207.3 438.8,225.5 449.3,233.2 451.2,232.2 462.8,241.8 461.8,246.6 456.0,247.5 456.0,256.2 465.6,260.0 473.3,268.6 478.1,269.6 482.0,259.0 490.6,262.0 500.2,249.5 505.9,246.6 519.3,241.8 521.3,247.5 530.9,257.1 534.7,253.3 528.0,244.7 527.0,237.0 538.5,240.8 545.2,224.5 553.9,224.5 548.1,247.5 549.1,257.1 561.3,258.2 580.5,251.5 595.8,263.0 609.2,242.9 634.1,243.8 649.5,261.1 655.2,240.0 681.5,131.2 803.4,161.7 798.3,186.0 818.8,229.4 894.2,260.1 889.4,280.0 872.1,360.6 857.7,375.0 831.8,372.0 823.2,386.5 830.4,400.9 837.6,400.9 859.1,409.5 853.4,445.5 831.8,438.3 820.0,456.0 804.6,461.0 760.9,498.0 646.8,469.5 648.5,454.4 660.3,427.5 680.4,402.3 626.7,392.3 645.2,318.5 643.7,317.6 582.4,304.2 572.8,318.6 574.7,335.8 524.9,343.5 507.7,337.7 517.2,322.4 542.2,312.8 526.8,295.6 524.9,280.2 511.5,283.1 509.6,291.7 500.0,289.8 496.3,297.4 481.0,294.5 472.0,289.0 459.9,305.1 462.0,284.0 456.0,280.2 440.7,251.4 429.2,243.7 410.0,244.7 400.0,245.4 378.8,248.0 376.2,240.3 378.8,237.8 366.0,237.8 366.0,254.4 362.2,258.2 364.7,261.4 360.9,263.3 359.6,274.8 366.0,277.4 366.0,281.2 369.8,290.2 366.0,291.5 362.2,285.0 354.5,278.7 348.1,285.0 345.6,292.7 337.9,294.6 332.8,301.7 330.9,299.1 336.6,293.4 343.0,288.9 344.3,283.8 350.7,276.1 350.7,269.7 354.5,267.2 350.7,259.5 355.8,258.2 352.0,250.6 343.0,248.6 331.5,237.8 322.0,232.7 320.1,226.0 317.3,220.3 315.3,226.0 312.5,219.3 312.5,215.5 305.8,211.6 300.0,206.8 292.3,213.7 297.9,207.0 292.3,202.5 284.5,193.6 276.7,192.4 262.0,189.6 261.0,195.8 259.9,189.0 239.7,182.4 228.6,181.8 217.4,185.7 211.8,193.6 205.0,197.0 208.4,201.4 204.0,200.3 201.2,195.2 209.5,188.0 215.0,180.0" stroke="#000" stroke-opacity="0.25" stroke-width="9"/>
<polygon points="206.2,169.0 216.3,174.5 228.6,171.2 237.0,169.5 237.5,171.7 240.9,174.0 262.0,177.3 267.7,170.0 275.5,166.2 271.0,173.4 271.0,176.8 280.0,170.6 285.6,171.2 282.2,177.3 303.5,180.0 311.5,180.0 311.5,183.8 307.2,188.6 307.7,191.5 313.4,197.3 322.0,195.8 328.3,196.3 323.0,202.5 329.7,209.7 334.0,198.2 336.4,200.1 345.0,214.5 357.0,227.6 366.0,230.0 374.0,231.0 384.0,226.5 372.9,221.2 366.2,216.4 365.2,203.0 357.5,191.5 361.4,189.1 365.2,195.3 371.9,194.4 375.7,198.2 376.7,204.9 379.6,205.9 379.6,197.7 390.0,204.0 395.5,199.7 405.9,200.8 408.0,215.3 410.0,215.9 415.8,216.9 417.7,221.7 423.4,220.7 425.3,206.3 431.1,207.3 438.8,225.5 449.3,233.2 451.2,232.2 462.8,241.8 461.8,246.6 456.0,247.5 456.0,256.2 465.6,260.0 473.3,268.6 478.1,269.6 482.0,259.0 490.6,262.0 500.2,249.5 505.9,246.6 519.3,241.8 521.3,247.5 530.9,257.1 534.7,253.3 528.0,244.7 527.0,237.0 538.5,240.8 545.2,224.5 553.9,224.5 548.1,247.5 549.1,257.1 561.3,258.2 580.5,251.5 595.8,263.0 609.2,242.9 634.1,243.8 649.5,261.1 655.2,240.0 681.5,131.2 803.4,161.7 798.3,186.0 818.8,229.4 894.2,260.1 889.4,280.0 872.1,360.6 857.7,375.0 831.8,372.0 823.2,386.5 830.4,400.9 837.6,400.9 859.1,409.5 853.4,445.5 831.8,438.3 820.0,456.0 804.6,461.0 760.9,498.0 646.8,469.5 648.5,454.4 660.3,427.5 680.4,402.3 626.7,392.3 645.2,318.5 643.7,317.6 582.4,304.2 572.8,318.6 574.7,335.8 524.9,343.5 507.7,337.7 517.2,322.4 542.2,312.8 526.8,295.6 524.9,280.2 511.5,283.1 509.6,291.7 500.0,289.8 496.3,297.4 481.0,294.5 472.0,289.0 459.9,305.1 462.0,284.0 456.0,280.2 440.7,251.4 429.2,243.7 410.0,244.7 400.0,245.4 378.8,248.0 376.2,240.3 378.8,237.8 366.0,237.8 366.0,254.4 362.2,258.2 364.7,261.4 360.9,263.3 359.6,274.8 366.0,277.4 366.0,281.2 369.8,290.2 366.0,291.5 362.2,285.0 354.5,278.7 348.1,285.0 345.6,292.7 337.9,294.6 332.8,301.7 330.9,299.1 336.6,293.4 343.0,288.9 344.3,283.8 350.7,276.1 350.7,269.7 354.5,267.2 350.7,259.5 355.8,258.2 352.0,250.6 343.0,248.6 331.5,237.8 322.0,232.7 320.1,226.0 317.3,220.3 315.3,226.0 312.5,219.3 312.5,215.5 305.8,211.6 300.0,206.8 292.3,213.7 297.9,207.0 292.3,202.5 284.5,193.6 276.7,192.4 262.0,189.6 261.0,195.8 259.9,189.0 239.7,182.4 228.6,181.8 217.4,185.7 211.8,193.6 205.0,197.0 208.4,201.4 204.0,200.3 201.2,195.2 209.5,188.0 215.0,180.0" stroke="#000" stroke-opacity="0.3" stroke-width="5"/>
<polygon points="206.2,169.0 216.3,174.5 228.6,171.2 237.0,169.5 237.5,171.7 240.9,174.0 262.0,177.3 267.7,170.0 275.5,166.2 271.0,173.4 271.0,176.8 280.0,170.6 285.6,171.2 282.2,177.3 303.5,180.0 311.5,180.0 311.5,183.8 307.2,188.6 307.7,191.5 313.4,197.3 322.0,195.8 328.3,196.3 323.0,202.5 329.7,209.7 334.0,198.2 336.4,200.1 345.0,214.5 357.0,227.6 366.0,230.0 374.0,231.0 384.0,226.5 372.9,221.2 366.2,216.4 365.2,203.0 357.5,191.5 361.4,189.1 365.2,195.3 371.9,194.4 375.7,198.2 376.7,204.9 379.6,205.9 379.6,197.7 390.0,204.0 395.5,199.7 405.9,200.8 408.0,215.3 410.0,215.9 415.8,216.9 417.7,221.7 423.4,220.7 425.3,206.3 431.1,207.3 438.8,225.5 449.3,233.2 451.2,232.2 462.8,241.8 461.8,246.6 456.0,247.5 456.0,256.2 465.6,260.0 473.3,268.6 478.1,269.6 482.0,259.0 490.6,262.0 500.2,249.5 505.9,246.6 519.3,241.8 521.3,247.5 530.9,257.1 534.7,253.3 528.0,244.7 527.0,237.0 538.5,240.8 545.2,224.5 553.9,224.5 548.1,247.5 549.1,257.1 561.3,258.2 580.5,251.5 595.8,263.0 609.2,242.9 634.1,243.8 649.5,261.1 655.2,240.0 681.5,131.2 803.4,161.7 798.3,186.0 818.8,229.4 894.2,260.1 889.4,280.0 872.1,360.6 857.7,375.0 831.8,372.0 823.2,386.5 830.4,400.9 837.6,400.9 859.1,409.5 853.4,445.5 831.8,438.3 820.0,456.0 804.6,461.0 760.9,498.0 646.8,469.5 648.5,454.4 660.3,427.5 680.4,402.3 626.7,392.3 645.2,318.5 643.7,317.6 582.4,304.2 572.8,318.6 574.7,335.8 524.9,343.5 507.7,337.7 517.2,322.4 542.2,312.8 526.8,295.6 524.9,280.2 511.5,283.1 509.6,291.7 500.0,289.8 496.3,297.4 481.0,294.5 472.0,289.0 459.9,305.1 462.0,284.0 456.0,280.2 440.7,251.4 429.2,243.7 410.0,244.7 400.0,245.4 378.8,248.0 376.2,240.3 378.8,237.8 366.0,237.8 366.0,254.4 362.2,258.2 364.7,261.4 360.9,263.3 359.6,274.8 366.0,277.4 366.0,281.2 369.8,290.2 366.0,291.5 362.2,285.0 354.5,278.7 348.1,285.0 345.6,292.7 337.9,294.6 332.8,301.7 330.9,299.1 336.6,293.4 343.0,288.9 344.3,283.8 350.7,276.1 350.7,269.7 354.5,267.2 350.7,259.5 355.8,258.2 352.0,250.6 343.0,248.6 331.5,237.8 322.0,232.7 320.1,226.0 317.3,220.3 315.3,226.0 312.5,219.3 312.5,215.5 305.8,211.6 300.0,206.8 292.3,213.7 297.9,207.0 292.3,202.5 284.5,193.6 276.7,192.4 262.0,189.6 261.0,195.8 259.9,189.0 239.7,182.4 228.6,181.8 217.4,185.7 211.8,193.6 205.0,197.0 208.4,201.4 204.0,200.3 201.2,195.2 209.5,188.0 215.0,180.0" stroke="#000" stroke-opacity="0.4" stroke-width="2.5"/>
</g>
<g mask="url(#lm)" fill="none" stroke-linejoin="round">
<polygon points="206.2,169.0 216.3,174.5 228.6,171.2 237.0,169.5 237.5,171.7 240.9,174.0 262.0,177.3 267.7,170.0 275.5,166.2 271.0,173.4 271.0,176.8 280.0,170.6 285.6,171.2 282.2,177.3 303.5,180.0 311.5,180.0 311.5,183.8 307.2,188.6 307.7,191.5 313.4,197.3 322.0,195.8 328.3,196.3 323.0,202.5 329.7,209.7 334.0,198.2 336.4,200.1 345.0,214.5 357.0,227.6 366.0,230.0 374.0,231.0 384.0,226.5 372.9,221.2 366.2,216.4 365.2,203.0 357.5,191.5 361.4,189.1 365.2,195.3 371.9,194.4 375.7,198.2 376.7,204.9 379.6,205.9 379.6,197.7 390.0,204.0 395.5,199.7 405.9,200.8 408.0,215.3 410.0,215.9 415.8,216.9 417.7,221.7 423.4,220.7 425.3,206.3 431.1,207.3 438.8,225.5 449.3,233.2 451.2,232.2 462.8,241.8 461.8,246.6 456.0,247.5 456.0,256.2 465.6,260.0 473.3,268.6 478.1,269.6 482.0,259.0 490.6,262.0 500.2,249.5 505.9,246.6 519.3,241.8 521.3,247.5 530.9,257.1 534.7,253.3 528.0,244.7 527.0,237.0 538.5,240.8 545.2,224.5 553.9,224.5 548.1,247.5 549.1,257.1 561.3,258.2 580.5,251.5 595.8,263.0 609.2,242.9 634.1,243.8 649.5,261.1 655.2,240.0 681.5,131.2 803.4,161.7 798.3,186.0 818.8,229.4 894.2,260.1 889.4,280.0 872.1,360.6 857.7,375.0 831.8,372.0 823.2,386.5 830.4,400.9 837.6,400.9 859.1,409.5 853.4,445.5 831.8,438.3 820.0,456.0 804.6,461.0 760.9,498.0 646.8,469.5 648.5,454.4 660.3,427.5 680.4,402.3 626.7,392.3 645.2,318.5 643.7,317.6 582.4,304.2 572.8,318.6 574.7,335.8 524.9,343.5 507.7,337.7 517.2,322.4 542.2,312.8 526.8,295.6 524.9,280.2 511.5,283.1 509.6,291.7 500.0,289.8 496.3,297.4 481.0,294.5 472.0,289.0 459.9,305.1 462.0,284.0 456.0,280.2 440.7,251.4 429.2,243.7 410.0,244.7 400.0,245.4 378.8,248.0 376.2,240.3 378.8,237.8 366.0,237.8 366.0,254.4 362.2,258.2 364.7,261.4 360.9,263.3 359.6,274.8 366.0,277.4 366.0,281.2 369.8,290.2 366.0,291.5 362.2,285.0 354.5,278.7 348.1,285.0 345.6,292.7 337.9,294.6 332.8,301.7 330.9,299.1 336.6,293.4 343.0,288.9 344.3,283.8 350.7,276.1 350.7,269.7 354.5,267.2 350.7,259.5 355.8,258.2 352.0,250.6 343.0,248.6 331.5,237.8 322.0,232.7 320.1,226.0 317.3,220.3 315.3,226.0 312.5,219.3 312.5,215.5 305.8,211.6 300.0,206.8 292.3,213.7 297.9,207.0 292.3,202.5 284.5,193.6 276.7,192.4 262.0,189.6 261.0,195.8 259.9,189.0 239.7,182.4 228.6,181.8 217.4,185.7 211.8,193.6 205.0,197.0 208.4,201.4 204.0,200.3 201.2,195.2 209.5,188.0 215.0,180.0" stroke="#000" stroke-opacity="0.12" stroke-width="14"/>
<polygon points="206.2,169.0 216.3,174.5 228.6,171.2 237.0,169.5 237.5,171.7 240.9,174.0 262.0,177.3 267.7,170.0 275.5,166.2 271.0,173.4 271.0,176.8 280.0,170.6 285.6,171.2 282.2,177.3 303.5,180.0 311.5,180.0 311.5,183.8 307.2,188.6 307.7,191.5 313.4,197.3 322.0,195.8 328.3,196.3 323.0,202.5 329.7,209.7 334.0,198.2 336.4,200.1 345.0,214.5 357.0,227.6 366.0,230.0 374.0,231.0 384.0,226.5 372.9,221.2 366.2,216.4 365.2,203.0 357.5,191.5 361.4,189.1 365.2,195.3 371.9,194.4 375.7,198.2 376.7,204.9 379.6,205.9 379.6,197.7 390.0,204.0 395.5,199.7 405.9,200.8 408.0,215.3 410.0,215.9 415.8,216.9 417.7,221.7 423.4,220.7 425.3,206.3 431.1,207.3 438.8,225.5 449.3,233.2 451.2,232.2 462.8,241.8 461.8,246.6 456.0,247.5 456.0,256.2 465.6,260.0 473.3,268.6 478.1,269.6 482.0,259.0 490.6,262.0 500.2,249.5 505.9,246.6 519.3,241.8 521.3,247.5 530.9,257.1 534.7,253.3 528.0,244.7 527.0,237.0 538.5,240.8 545.2,224.5 553.9,224.5 548.1,247.5 549.1,257.1 561.3,258.2 580.5,251.5 595.8,263.0 609.2,242.9 634.1,243.8 649.5,261.1 655.2,240.0 681.5,131.2 803.4,161.7 798.3,186.0 818.8,229.4 894.2,260.1 889.4,280.0 872.1,360.6 857.7,375.0 831.8,372.0 823.2,386.5 830.4,400.9 837.6,400.9 859.1,409.5 853.4,445.5 831.8,438.3 820.0,456.0 804.6,461.0 760.9,498.0 646.8,469.5 648.5,454.4 660.3,427.5 680.4,402.3 626.7,392.3 645.2,318.5 643.7,317.6 582.4,304.2 572.8,318.6 574.7,335.8 524.9,343.5 507.7,337.7 517.2,322.4 542.2,312.8 526.8,295.6 524.9,280.2 511.5,283.1 509.6,291.7 500.0,289.8 496.3,297.4 481.0,294.5 472.0,289.0 459.9,305.1 462.0,284.0 456.0,280.2 440.7,251.4 429.2,243.7 410.0,244.7 400.0,245.4 378.8,248.0 376.2,240.3 378.8,237.8 366.0,237.8 366.0,254.4 362.2,258.2 364.7,261.4 360.9,263.3 359.6,274.8 366.0,277.4 366.0,281.2 369.8,290.2 366.0,291.5 362.2,285.0 354.5,278.7 348.1,285.0 345.6,292.7 337.9,294.6 332.8,301.7 330.9,299.1 336.6,293.4 343.0,288.9 344.3,283.8 350.7,276.1 350.7,269.7 354.5,267.2 350.7,259.5 355.8,258.2 352.0,250.6 343.0,248.6 331.5,237.8 322.0,232.7 320.1,226.0 317.3,220.3 315.3,226.0 312.5,219.3 312.5,215.5 305.8,211.6 300.0,206.8 292.3,213.7 297.9,207.0 292.3,202.5 284.5,193.6 276.7,192.4 262.0,189.6 261.0,195.8 259.9,189.0 239.7,182.4 228.6,181.8 217.4,185.7 211.8,193.6 205.0,197.0 208.4,201.4 204.0,200.3 201.2,195.2 209.5,188.0 215.0,180.0" stroke="#000" stroke-opacity="0.14" stroke-width="8"/>
<polygon points="206.2,169.0 216.3,174.5 228.6,171.2 237.0,169.5 237.5,171.7 240.9,174.0 262.0,177.3 267.7,170.0 275.5,166.2 271.0,173.4 271.0,176.8 280.0,170.6 285.6,171.2 282.2,177.3 303.5,180.0 311.5,180.0 311.5,183.8 307.2,188.6 307.7,191.5 313.4,197.3 322.0,195.8 328.3,196.3 323.0,202.5 329.7,209.7 334.0,198.2 336.4,200.1 345.0,214.5 357.0,227.6 366.0,230.0 374.0,231.0 384.0,226.5 372.9,221.2 366.2,216.4 365.2,203.0 357.5,191.5 361.4,189.1 365.2,195.3 371.9,194.4 375.7,198.2 376.7,204.9 379.6,205.9 379.6,197.7 390.0,204.0 395.5,199.7 405.9,200.8 408.0,215.3 410.0,215.9 415.8,216.9 417.7,221.7 423.4,220.7 425.3,206.3 431.1,207.3 438.8,225.5 449.3,233.2 451.2,232.2 462.8,241.8 461.8,246.6 456.0,247.5 456.0,256.2 465.6,260.0 473.3,268.6 478.1,269.6 482.0,259.0 490.6,262.0 500.2,249.5 505.9,246.6 519.3,241.8 521.3,247.5 530.9,257.1 534.7,253.3 528.0,244.7 527.0,237.0 538.5,240.8 545.2,224.5 553.9,224.5 548.1,247.5 549.1,257.1 561.3,258.2 580.5,251.5 595.8,263.0 609.2,242.9 634.1,243.8 649.5,261.1 655.2,240.0 681.5,131.2 803.4,161.7 798.3,186.0 818.8,229.4 894.2,260.1 889.4,280.0 872.1,360.6 857.7,375.0 831.8,372.0 823.2,386.5 830.4,400.9 837.6,400.9 859.1,409.5 853.4,445.5 831.8,438.3 820.0,456.0 804.6,461.0 760.9,498.0 646.8,469.5 648.5,454.4 660.3,427.5 680.4,402.3 626.7,392.3 645.2,318.5 643.7,317.6 582.4,304.2 572.8,318.6 574.7,335.8 524.9,343.5 507.7,337.7 517.2,322.4 542.2,312.8 526.8,295.6 524.9,280.2 511.5,283.1 509.6,291.7 500.0,289.8 496.3,297.4 481.0,294.5 472.0,289.0 459.9,305.1 462.0,284.0 456.0,280.2 440.7,251.4 429.2,243.7 410.0,244.7 400.0,245.4 378.8,248.0 376.2,240.3 378.8,237.8 366.0,237.8 366.0,254.4 362.2,258.2 364.7,261.4 360.9,263.3 359.6,274.8 366.0,277.4 366.0,281.2 369.8,290.2 366.0,291.5 362.2,285.0 354.5,278.7 348.1,285.0 345.6,292.7 337.9,294.6 332.8,301.7 330.9,299.1 336.6,293.4 343.0,288.9 344.3,283.8 350.7,276.1 350.7,269.7 354.5,267.2 350.7,259.5 355.8,258.2 352.0,250.6 343.0,248.6 331.5,237.8 322.0,232.7 320.1,226.0 317.3,220.3 315.3,226.0 312.5,219.3 312.5,215.5 305.8,211.6 300.0,206.8 292.3,213.7 297.9,207.0 292.3,202.5 284.5,193.6 276.7,192.4 262.0,189.6 261.0,195.8 259.9,189.0 239.7,182.4 228.6,181.8 217.4,185.7 211.8,193.6 205.0,197.0 208.4,201.4 204.0,200.3 201.2,195.2 209.5,188.0 215.0,180.0" stroke="#000" stroke-opacity="0.2" stroke-width="3.5"/>
</g>
<polyline points="218,178 240,176 262,183 290,186 310,196 330,212 350,232 360,250" fill="none" stroke="#fff" stroke-opacity="0.08" stroke-width="3"/>
<polyline points="375,231 395,238 420,232 440,245 460,262 480,282 510,275 530,268" fill="none" stroke="#fff" stroke-opacity="0.12" stroke-width="5"/>
<!-- block base -->
<polygon points="655,120 900,120 900,520 600,520 626,392 645,318" fill="#c2c2c2"/><polygon points="640,240 656,240 652,300 645,318 636,318" fill="#b0b0b0"/>
<polygon points="681,128 795,158 785,165 757,171 740,178 717,170 700,161 699,190 692,210 705,236 715,262 735,279 720,292 700,300 660,300 645,318 655,240" fill="#b0b0b0"/>
<polygon points="681,128 790,156 778,163 750,168 730,158 708,150 695,150 688,175 676,200 664,212 656,240" fill="#a3a3a3"/>
<polygon points="681,128 778,153 770,161 748,163 728,152 704,142 690,143 684,150" fill="#959595"/>
<polygon points="740,146 778,155 768,163 752,162" fill="#868686"/>
<polygon points="676,158 684,160 686,175 678,182 670,180" fill="#a0a0a0"/>
<polygon points="663.5,200 678.8,210.2 694.2,230.7 696.7,251 684,266.4 653.3,261.3 652,258.8" fill="#8c8c8c"/>
<polygon points="658.4,225.5 673.7,230.7 681.4,251 673.7,263.9 653.3,261.3" fill="#727272"/>

<polygon points="717,200 728,180.7 758,177.4 761.6,188 764,214.3 788,240.6 823.8,262.2 864.5,276.5 891,281.3 889,302 869,305 836.5,298.5 810,301.8 771,288.7 748,272.3 735,259.2 718.6,252.7 715,223" fill="#d7d7d7"/>
<polygon points="785.5,158 761.6,188 764,214.3 788,240.6 823.8,262.2 864.5,276.5 891,281.3 900,281 900,120 790,120" fill="#ebebea"/>
<polygon points="792.7,160.4 776,197.5 790.3,226.2 819,243 840.6,255 871.7,269.3 893.3,262 900,262 900,120 795,120" fill="#f7f8f7"/>
<!-- lower block -->
<polygon points="586.9,299.6 607.3,297 638,302.2 658.4,307.3 678.8,320 673.7,327.7 648,320 612.4,312.4 584.3,304.8" fill="#9c9c9c"/>
<polygon points="584.3,286.9 615,258.8 632.9,256.2 658.4,276.6 678.8,286.9 719.7,286.9 719.7,300 678.8,302.2 653.3,294.5 622.6,289.4 584.3,297" fill="#b9b9b9"/><polygon points="525.5,274 551,264 584.3,266.4 607.3,281.8 584.3,292 569,307.3 561.3,327.7 551,330.3 543.4,297 525.5,281.8" fill="#a6a6a6"/>
<polygon points="760,300 790,296 815,306 830,320 870,330 880,335 872,360 858,375 832,372 823,386 810,360 790,345 770,330" fill="#cbcbcb"/>
<polygon points="838,350 872,335 872,360 858,375 836,372" fill="#bdbdbd"/><polygon points="852,366 864,355 870,358 860,374 848,373" fill="#a8a8a8"/>
<polygon points="633,380.8 655,377 695.4,383 691,402.3 672,402 660,400 636,395" fill="#b6b6b6"/>
<polygon points="684.7,400 691,402.3 684.7,413 691,430 693.3,452 680,469 668,470 646,470 648,454 660,427 672,405" fill="#b3b3b3"/><polygon points="656.6,391 666,388 675,392 674,400 660,399" fill="#a9a9a9"/><polygon points="666,443 671,440 673,454 667,454" fill="#c0c0c0"/>
<polygon points="800,455 820,452 806,470 780,490 762,500 775,478" fill="#b9b9b9"/>
<polyline points="628,285.7 660,289 678,292 694.8,294 710,310 723.9,327.2 753,333.5 765.4,329.3" fill="none" stroke="#dedede" stroke-width="0.8"/>
</g>
<polyline points="790,158.5 803.4,161.7 798.3,186 818.8,229.4 894.2,260.1 892,270" fill="none" stroke="#fff" stroke-width="0.8"/>
</svg><div class="t" style="left:189px;top:543.5px;color:#3a3c3e">Temporal Controller</div>
<svg class="i" style="left:923px;top:544px" width="15" height="8" viewBox="0 0 15 8"><rect x="0.5" y="0.5" width="6" height="6" fill="none" stroke="#666"/><path d="M1 6l5-5M3 2h3v3" stroke="#666" fill="none"/><rect x="8.5" y="0.5" width="6" height="6" fill="none" stroke="#666"/><path d="M9.5 1.5l4 4M13.5 1.5l-4 4" stroke="#666"/></svg>
<svg class="i" style="left:927px;top:554px" width="10" height="10" viewBox="0 0 10 10"><circle cx="5" cy="5" r="3.5" fill="#f0c830"/><path d="M5 0v10M0 5h10M1.5 1.5l7 7M8.5 1.5l-7 7" stroke="#f0c830" stroke-width="1.2"/></svg>
<div class="btn" style="left:186px;top:553px;width:14px;height:12px;"></div>
<svg class="i" style="left:189px;top:555px" width="8" height="9" viewBox="0 0 8 9"><path d="M1 0.5h6M1 8.5h6" stroke="#555"/><path d="M1 1l6 7M7 1L1 8" stroke="#d9531e" stroke-width="1.2"/></svg>
<div class="btn" style="left:201px;top:553px;width:13px;height:12px;background:#f2f2f3;border-color:#d0d2d4"></div>
<svg class="i" style="left:203px;top:555px" width="9" height="9" viewBox="0 0 9 9"><circle cx="4.5" cy="4.5" r="3.8" fill="none" stroke="#aaa"/><path d="M4.5 1.5v3" stroke="#aaa"/></svg>
<div class="sel" style="left:215px;top:553px;width:13px;height:12px;"></div>
<svg class="i" style="left:217px;top:555px" width="9" height="9" viewBox="0 0 9 9"><circle cx="4.5" cy="4.5" r="3.8" fill="none" stroke="#666"/><path d="M4.5 1.5v3l2 1" stroke="#4caf50" fill="none"/></svg>
<div class="t" style="left:229.6px;top:555.0px;color:#2d2f31">Frame: 1900 01 01 00:00:00 to 1900 01 01 01:06:40</div>
<div class="btn" style="left:186px;top:572px;width:14px;height:13px;"></div>
<svg class="i" style="left:188.5px;top:574.5px" width="9" height="8" viewBox="0 0 9 8"><path d="M1 1v6" stroke="#111" stroke-width="1.2"/><path d="M5 1L2 4l3 3zM8 1L5 4l3 3z" fill="#111"/></svg>
<div class="btn" style="left:203px;top:572px;width:13px;height:13px;"></div>
<svg class="i" style="left:205.0px;top:574.5px" width="9" height="8" viewBox="0 0 9 8"><path d="M2 1v6" stroke="#111" stroke-width="1.2"/><path d="M7 1L3 4l4 3z" fill="#111"/></svg>
<div class="btn" style="left:219px;top:572px;width:14px;height:13px;"></div>
<svg class="i" style="left:221.5px;top:574.5px" width="9" height="8" viewBox="0 0 9 8"><path d="M6 1L3 4l3 3z" fill="#111"/></svg>
<div class="btn" style="left:235px;top:572px;width:15px;height:13px;"></div>
<svg class="i" style="left:238.0px;top:574.5px" width="9" height="8" viewBox="0 0 9 8"><path d="M3 1v6M5.5 1v6" stroke="#111" stroke-width="1.4"/></svg>
<div class="btn" style="left:252px;top:572px;width:14px;height:13px;"></div>
<svg class="i" style="left:254.5px;top:574.5px" width="9" height="8" viewBox="0 0 9 8"><path d="M3 1l3 3-3 3z" fill="#111"/></svg>
<div class="btn" style="left:268px;top:572px;width:14px;height:13px;"></div>
<svg class="i" style="left:270.5px;top:574.5px" width="9" height="8" viewBox="0 0 9 8"><path d="M7 1v6" stroke="#111" stroke-width="1.2"/><path d="M2 1l4 3-4 3z" fill="#111"/></svg>
<div class="btn" style="left:284px;top:572px;width:14px;height:13px;"></div>
<svg class="i" style="left:286.5px;top:574.5px" width="9" height="8" viewBox="0 0 9 8"><path d="M8 1v6" stroke="#111" stroke-width="1.2"/><path d="M1 1l3 3-3 3zM4 1l3 3-3 3z" fill="#111"/></svg>
<div class="a" style="left:305px;top:578px;width:602px;height:1px;background:#a8aaac"></div>
<div class="a" style="left:302px;top:575px;width:6px;height:7px;border:1px solid #a0a2a4;border-radius:3px;background:#fafafa"></div>
<svg class="i" style="left:909px;top:574px" width="8" height="8" viewBox="0 0 8 8"><rect x="0.5" y="0.5" width="7" height="7" fill="#fff" stroke="#999"/></svg>
<div class="t" style="left:919px;top:574.0px;">Loop</div>
<div class="t" style="left:187px;top:593.1px;">Range</div>
<div class="inp" style="left:209px;top:591px;width:180px;height:13px"></div>
<div class="a" style="left:381px;top:592px;width:1px;height:11px;background:#d4d4d4"></div>
<svg class="i" style="left:382px;top:592px" width="6" height="11" viewBox="0 0 6 11"><path d="M1.5 4l1.5-2 1.5 2zM1.5 7l1.5 2 1.5-2z" fill="#777"/></svg>
<div class="t" style="left:211.5px;top:593.1px;">1900-01-01 00:00:00</div>
<div class="t" style="left:389.5px;top:593.1px;">to</div>
<div class="inp" style="left:400px;top:591px;width:180px;height:13px"></div>
<div class="a" style="left:572px;top:592px;width:1px;height:11px;background:#d4d4d4"></div>
<svg class="i" style="left:573px;top:592px" width="6" height="11" viewBox="0 0 6 11"><path d="M1.5 4l1.5-2 1.5 2zM1.5 7l1.5 2 1.5-2z" fill="#777"/></svg>
<div class="t" style="left:402.5px;top:593.1px;">1900-01-01 01:06:40</div>
<svg class="i" style="left:584px;top:593px" width="9" height="9" viewBox="0 0 9 9"><path d="M1 4.5a3.5 3.5 0 0 1 6-2.5l1-1v3.5H4.5l1.3-1.3a2 2 0 0 0-3.3 1.3z" fill="#3a86d0"/><path d="M8 4.5a3.5 3.5 0 0 1-6 2.5l-1 1V4.5h3.5L3.2 5.8a2 2 0 0 0 3.3-1.3z" fill="#3a86d0"/></svg>
<svg class="i" style="left:595px;top:596px" width="4" height="3" viewBox="0 0 4 3"><path d="M0 0h4l-2 2z" fill="#888"/></svg>
<div class="t" style="left:602px;top:593.1px;">Step</div>
<div class="inp" style="left:618px;top:590px;width:68px;height:14px"></div>
<div class="t" style="left:620.5px;top:593.1px;">4000.000</div>
<svg class="i" style="left:668px;top:594px" width="7" height="6" viewBox="0 0 7 6"><rect x="0.5" y="0.5" width="6" height="5" fill="#ccc"/><path d="M2 1.5l3 3M5 1.5l-3 3" stroke="#fff" stroke-width="0.8"/></svg>
<div class="a" style="left:678px;top:591px;width:1px;height:12px;background:#d4d4d4"></div>
<svg class="i" style="left:679px;top:591px" width="6" height="12" viewBox="0 0 6 12"><path d="M1.5 4l1.5-2 1.5 2zM1.5 8l1.5 2 1.5-2z" fill="#777"/></svg>
<div class="btn" style="left:687px;top:590px;width:56px;height:14px"></div>
<div class="t" style="left:690px;top:593.1px;">seconds</div>
<svg class="i" style="left:734px;top:596px" width="5" height="3" viewBox="0 0 5 3"><path d="M0.5 0.5h4L2.5 2.5z" fill="#777"/></svg>
<svg class="i" style="left:748px;top:593px" width="8" height="9" viewBox="0 0 8 9"><rect x="0.5" y="0.5" width="7" height="8" fill="#4a7fc0"/><rect x="2" y="1" width="4" height="3" fill="#dde"/><rect x="2" y="6" width="4" height="2.5" fill="#dde"/></svg><div class="t" style="left:945px;top:87.1px;color:#3a3c3e">Layer Styling</div>
<svg class="i" style="left:1185px;top:88px" width="15" height="8" viewBox="0 0 15 8"><rect x="0.5" y="0.5" width="6" height="6" fill="none" stroke="#666"/><path d="M1 6l5-5M3 2h3v3" stroke="#666" fill="none"/><rect x="8.5" y="0.5" width="6" height="6" fill="none" stroke="#666"/><path d="M9.5 1.5l4 4M13.5 1.5l-4 4" stroke="#666"/></svg>
<div class="a" style="left:943px;top:98px;width:256px;height:14px;border:1px solid #b9bbbd;border-radius:2px;background:linear-gradient(#fcfcfc,#f1f2f3)"></div>
<svg class="i" style="left:947px;top:101px" width="9" height="9" viewBox="0 0 9 9"><rect x="0.5" y="0.5" width="7" height="8" fill="#e4ecf4" stroke="#6a8ab0"/><path d="M0.5 4.5h7M4 0.5v8" stroke="#6a8ab0"/></svg>
<div class="t" style="left:957px;top:101.0px;color:#2d2f31">example_res_fr</div>
<svg class="i" style="left:1190px;top:104px" width="5" height="3" viewBox="0 0 5 3"><path d="M0.5 0.5h4L2.5 2.5z" fill="#777"/></svg>
<svg class="i" style="left:948px;top:120px" width="15" height="14" viewBox="0 0 15 14"><path d="M1 9c2-3 5-4 8-3l-3 6c-2 1-4 0-5-3z" fill="#8bc34a"/><path d="M2 7l4-2 3 1-2 3z" fill="#e57373"/><path d="M3 11l3-1" stroke="#e91e63" stroke-width="1.5"/><path d="M9 6l5-5" stroke="#6d4c41" stroke-width="1.4"/><circle cx="4" cy="7" r="1.5" fill="#64b5f6"/></svg>
<div class="a" style="left:969px;top:134px;width:230px;height:1px;background:#bfc1c3"></div>
<div class="a" style="left:969px;top:116px;width:27px;height:19px;border:1px solid #b9bbbd;border-bottom:none;border-radius:2px 2px 0 0;background:#fcfcfc"></div>
<div class="a" style="left:997px;top:117px;width:27px;height:17px;border:1px solid #c4c6c8;border-bottom:none;border-radius:2px 2px 0 0;background:linear-gradient(#f4f5f6,#e9eaeb)"></div>
<div class="a" style="left:1025px;top:117px;width:26px;height:17px;border:1px solid #c4c6c8;border-bottom:none;border-radius:2px 2px 0 0;background:linear-gradient(#f4f5f6,#e9eaeb)"></div>
<div class="a" style="left:1052px;top:117px;width:27px;height:17px;border:1px solid #c4c6c8;border-bottom:none;border-radius:2px 2px 0 0;background:linear-gradient(#f4f5f6,#e9eaeb)"></div>
<div class="a" style="left:1080px;top:117px;width:26px;height:17px;border:1px solid #c4c6c8;border-bottom:none;border-radius:2px 2px 0 0;background:linear-gradient(#f4f5f6,#e9eaeb)"></div>
<svg class="i" style="left:975px;top:119px" width="13" height="13" viewBox="0 0 13 13"><path d="M1.5 11.5L6.5 6" stroke="#2c5aa0" stroke-width="2"/><path d="M6 5.5l5.5 6" stroke="#f08a24" stroke-width="2.2"/><path d="M2 2.5Q6 -0.5 11 2.5L9 5Q6 2.5 3 3.5z" fill="#222"/></svg>
<svg class="i" style="left:1003px;top:119px" width="13" height="12" viewBox="0 0 13 12"><defs><linearGradient id="rb" x1="0" y1="1" x2="1" y2="0"><stop offset="0" stop-color="#f44"/><stop offset="0.3" stop-color="#fc0"/><stop offset="0.6" stop-color="#6c6"/><stop offset="1" stop-color="#39f"/></linearGradient></defs><rect x="0" y="0" width="12" height="12" fill="url(#rb)"/></svg>
<svg class="i" style="left:1032px;top:119px" width="13" height="12" viewBox="0 0 13 12"><path d="M1 1l9 9" stroke="#111" stroke-width="1.3"/><path d="M11 11L6 10l4-4z" fill="#111"/></svg>
<svg class="i" style="left:1059px;top:119px" width="12" height="12" viewBox="0 0 12 12"><rect x="0.5" y="0.5" width="10" height="11" fill="#fff" stroke="#111"/><path d="M0.5 3.5h10M0.5 6.5h10M0.5 9h10M4 0.5v11M7 0.5v11" stroke="#111"/></svg>
<svg class="i" style="left:1086px;top:119px" width="13" height="12" viewBox="0 0 13 12"><path d="M1 4l5-1 5 1-5 2zM1 8l5-1 5 1-5 2z" fill="#ddd" stroke="#555" stroke-width="0.6"/><path d="M6 0v12M4 3l2-2 2 2" stroke="#111" stroke-width="1.2" fill="none"/></svg>
<div class="a" style="left:943px;top:136px;width:24px;height:470px;background:#5a5a5a"></div>
<svg class="i" style="left:947px;top:140px" width="14" height="14" viewBox="0 0 14 14"><path d="M7 0.5l6 3v7l-6 3-6-3v-7z" fill="#8bc34a"/><path d="M1 3.5l6 3 6-3-6-3z" fill="#e53935"/><path d="M7 6.5v7l6-3v-7z" fill="#fdd835"/><path d="M4 3h6" stroke="#fff" stroke-width="0.6"/></svg>
<svg class="i" style="left:946px;top:159px" width="15" height="14" viewBox="0 0 15 14"><rect x="4" y="0" width="6" height="5" fill="#e57373"/><path d="M7 5v3M2 8h10M2 8v2M12 8v2" stroke="#f0a030" stroke-width="1.5"/><rect x="0" y="9" width="6" height="5" fill="#fdd835"/><rect x="8" y="9" width="6" height="5" fill="#64b5f6"/></svg>
<svg class="i" style="left:947px;top:180px" width="14" height="13" viewBox="0 0 14 13"><path d="M1 4h7l-2-3M12 9H5l2 3" stroke="#8bc34a" stroke-width="1.6" fill="none"/><path d="M8 7c3 0 4 2 4 4" stroke="#f08a24" stroke-width="1.8" fill="none"/></svg>
<div class="a" style="left:969px;top:139px;width:230px;height:120px;border:1px solid #b9bbbd;background:#fcfcfc"></div>
<div class="a" style="left:970px;top:140px;width:228px;height:11px;background:linear-gradient(#f8f9fa,#eceeef);border-bottom:1px solid #dfe0e1"></div>
<div class="t" style="left:971px;top:141.0px;">Groups</div>
<div class="t" style="left:981.6px;top:151.7px;">vitesse</div>
<div class="t" style="left:1016.5px;top:151.7px;">ms</div>
<div class="t" style="left:981.6px;top:161.8px;">hauteur d'eau</div>
<div class="t" style="left:1032px;top:161.8px;">m</div>
<div class="t" style="left:981.6px;top:171.8px;">surface libre</div>
<div class="t" style="left:1027px;top:171.8px;">m</div>
<div class="t" style="left:981.6px;top:181.7px;">fond</div>
<div class="t" style="left:1019px;top:181.7px;">m</div>
<div class="a" style="left:1177px;top:151px;width:10px;height:30px;background:linear-gradient(90deg,#c8c8c8,#f0f0f0)"></div>
<svg class="i" style="left:1177px;top:180px" width="10" height="11" viewBox="0 0 10 11"><defs><linearGradient id="rb2" x1="0" y1="1" x2="1" y2="0"><stop offset="0" stop-color="#6c6"/><stop offset="0.5" stop-color="#fc0"/><stop offset="0.8" stop-color="#39f"/></linearGradient></defs><rect x="0" y="0" width="10" height="11" fill="url(#rb2)"/></svg>
<svg class="i" style="left:1189px;top:152px" width="9" height="8" viewBox="0 0 9 8"><path d="M1 1l6 5" stroke="#999" stroke-dasharray="1 1"/><path d="M8 4v3H5" stroke="#999" fill="none"/></svg>
<div class="t" style="left:969px;top:262.8px;">Dataset in selected group(s)</div>
<svg class="i" style="left:971px;top:279px" width="7" height="5" viewBox="0 0 7 5"><path d="M0.5 0.5h6L3.5 4z" fill="#222"/></svg>
<div class="t" style="left:983px;top:276.9px;"><b>Dataset group Metadata</b></div>
<div class="a" style="left:969px;top:288px;width:230px;height:58px;border:1px solid #cdd0d2;border-radius:2px;background:#e9eaeb"></div>
<div class="t" style="left:977px;top:295.5px;">Mesh type</div>
<div class="t" style="left:1011px;top:295.5px;">faces</div>
<div class="t" style="left:977px;top:306.9px;">Data type</div>
<div class="t" style="left:1011px;top:306.9px;">vertices</div>
<div class="t" style="left:977px;top:318.1px;">Is vector</div>
<div class="t" style="left:1011px;top:318.1px;">No</div>
<div class="t" style="left:977px;top:329.2px;">name</div>
<div class="t" style="left:1011px;top:329.2px;">fond m</div>
<svg class="i" style="left:971px;top:353px" width="7" height="5" viewBox="0 0 7 5"><path d="M0.5 0.5h6L3.5 4z" fill="#222"/></svg>
<div class="t" style="left:983px;top:350.5px;"><b>Layer Rendering</b></div>
<div class="a" style="left:969px;top:362px;width:230px;height:27px;border:1px solid #cdd0d2;border-radius:2px;background:#e9eaeb"></div>
<div class="t" style="left:975px;top:370.0px;">Blending mode</div>
<div class="a" style="left:1086px;top:367px;width:107px;height:16px;border:1px solid #b9bbbd;border-radius:2px;background:linear-gradient(#fdfdfd,#f1f2f3)"></div>
<div class="t" style="left:1089px;top:370.5px;">Normal</div>
<svg class="i" style="left:1183px;top:374px" width="5" height="3" viewBox="0 0 5 3"><path d="M0.5 0.5h4L2.5 2.5z" fill="#777"/></svg>
<div class="a" style="left:969px;top:594px;width:13px;height:12px;border:1px solid #c4c6c8;border-radius:2px;background:linear-gradient(#fcfcfc,#eff0f1)"></div>
<svg class="i" style="left:971px;top:596px" width="9" height="8" viewBox="0 0 9 8"><path d="M3 1L1 3.5 3 6M1 3.5h5c2 0 2 3 0 3.5" stroke="#e8641e" stroke-width="1.3" fill="none"/></svg>
<div class="a" style="left:986px;top:594px;width:13px;height:12px;border:1px solid #c4c6c8;border-radius:2px;background:linear-gradient(#fcfcfc,#eff0f1)"></div>
<svg class="i" style="left:988px;top:596px" width="9" height="8" viewBox="0 0 9 8"><path d="M6 1l2 2.5L6 6M8 3.5H3c-2 0-2 3 0 3.5" stroke="#6aaa3a" stroke-width="1.3" fill="none"/></svg>
<svg class="i" style="left:1094px;top:595px" width="8" height="8" viewBox="0 0 8 8"><rect x="0.5" y="0.5" width="7" height="7" fill="#fff" stroke="#999"/><path d="M2 4l1.5 1.5L6 2" stroke="#222" fill="none"/></svg>
<div class="t" style="left:1104px;top:595.0px;color:#2d2f31">Live update</div>
<div class="a" style="left:1149px;top:593px;width:50px;height:14px;border:1px solid #b9bbbd;border-radius:2px;background:linear-gradient(#fdfdfd,#eff0f1)"></div>
<svg class="i" style="left:1153px;top:595px" width="8" height="10" viewBox="0 0 8 10"><path d="M1 5l2 4L7 1" stroke="#5aa02c" stroke-width="1.6" fill="none"/></svg>
<div class="t" style="left:1161px;top:595.0px;">Appliquer</div>
<svg class="i" style="left:940px;top:342px" width="2" height="8" viewBox="0 0 2 8"><path d="M0.5 0v8" stroke="#999" stroke-dasharray="1 1.5"/></svg>
<svg class="i" style="left:184px;top:345px" width="2" height="8" viewBox="0 0 2 8"><path d="M0.5 0v8" stroke="#aaa" stroke-dasharray="1 1.5"/></svg><div class="t" style="left:745px;top:614.0px;color:#2d2f31;font-size:6px">Coordinate</div>
<div class="a" style="left:777px;top:611px;width:36px;height:13px;border:1px solid #c4c6c8;border-radius:2px;background:#fcfcfc"></div>
<div class="t" style="left:779px;top:614.0px;color:#555;font-size:6px">4388,7613</div>
<svg class="i" style="left:815px;top:613px" width="9" height="9" viewBox="0 0 9 9"><circle cx="3" cy="3" r="2.5" fill="none" stroke="#333"/><circle cx="6" cy="6" r="2.5" fill="none" stroke="#333"/><path d="M1 8l7-7" stroke="#333"/></svg>
<div class="t" style="left:832px;top:614.0px;color:#2d2f31;font-size:6px">Scale</div>
<div class="a" style="left:848px;top:611px;width:48px;height:13px;border:1px solid #c4c6c8;border-radius:2px;background:#fcfcfc"></div>
<div class="t" style="left:850px;top:614.0px;color:#555;font-size:6px">1:25180688</div>
<div class="a" style="left:884px;top:612px;width:1px;height:11px;background:#ddd"></div>
<svg class="i" style="left:887px;top:616px" width="5" height="3" viewBox="0 0 5 3"><path d="M0.5 0.5h4L2.5 2.5z" fill="#777"/></svg>
<svg class="i" style="left:904px;top:612px" width="7" height="10" viewBox="0 0 7 10"><path d="M1.5 4V2.5a2 2 0 0 1 4 0V4" stroke="#555" fill="none"/><rect x="0.5" y="4" width="6" height="6" fill="#555"/></svg>
<div class="t" style="left:915px;top:614.0px;color:#2d2f31;font-size:6px">Magnifier</div>
<div class="a" style="left:942px;top:611px;width:55px;height:13px;border:1px solid #c4c6c8;border-radius:2px;background:#fcfcfc"></div>
<div class="t" style="left:945px;top:614.0px;font-size:6px">100%</div>
<div class="a" style="left:989px;top:612px;width:1px;height:11px;background:#ddd"></div>
<svg class="i" style="left:990px;top:612px" width="6" height="11" viewBox="0 0 6 11"><path d="M1.5 4l1.5-2 1.5 2zM1.5 7l1.5 2 1.5-2z" fill="#777"/></svg>
<div class="t" style="left:1002px;top:614.0px;color:#2d2f31;font-size:6px">Rotation</div>
<div class="a" style="left:1031px;top:611px;width:50px;height:13px;border:1px solid #c4c6c8;border-radius:2px;background:#fcfcfc"></div>
<div class="t" style="left:1034px;top:614.0px;color:#555;font-size:6px">0.0 °</div>
<div class="a" style="left:1073px;top:612px;width:1px;height:11px;background:#ddd"></div>
<svg class="i" style="left:1074px;top:612px" width="6" height="11" viewBox="0 0 6 11"><path d="M1.5 4l1.5-2 1.5 2zM1.5 7l1.5 2 1.5-2z" fill="#777"/></svg>
<svg class="i" style="left:1086px;top:613px" width="8" height="8" viewBox="0 0 8 8"><rect x="0.5" y="0.5" width="7" height="7" fill="#fff" stroke="#999"/><path d="M2 4l1.5 1.5L6 2" stroke="#222" fill="none"/></svg>
<div class="t" style="left:1095px;top:614.0px;color:#2d2f31;font-size:6px">Render</div>
<svg class="i" style="left:1124px;top:613px" width="9" height="9" viewBox="0 0 9 9"><circle cx="4.5" cy="4.5" r="4" fill="none" stroke="#666"/><path d="M0.5 4.5h8M4.5 0.5v8" stroke="#666" stroke-width="0.6"/></svg>
<div class="t" style="left:1133px;top:614.0px;color:#2d2f31;font-size:6px">EPSG:4326</div>
<svg class="i" style="left:1175px;top:613px" width="9" height="9" viewBox="0 0 9 9"><path d="M1 1h7v5H4L2 8V6H1z" fill="#444"/><path d="M2.5 3.5h4" stroke="#fff" stroke-width="0.6"/></svg>
</body></html>
